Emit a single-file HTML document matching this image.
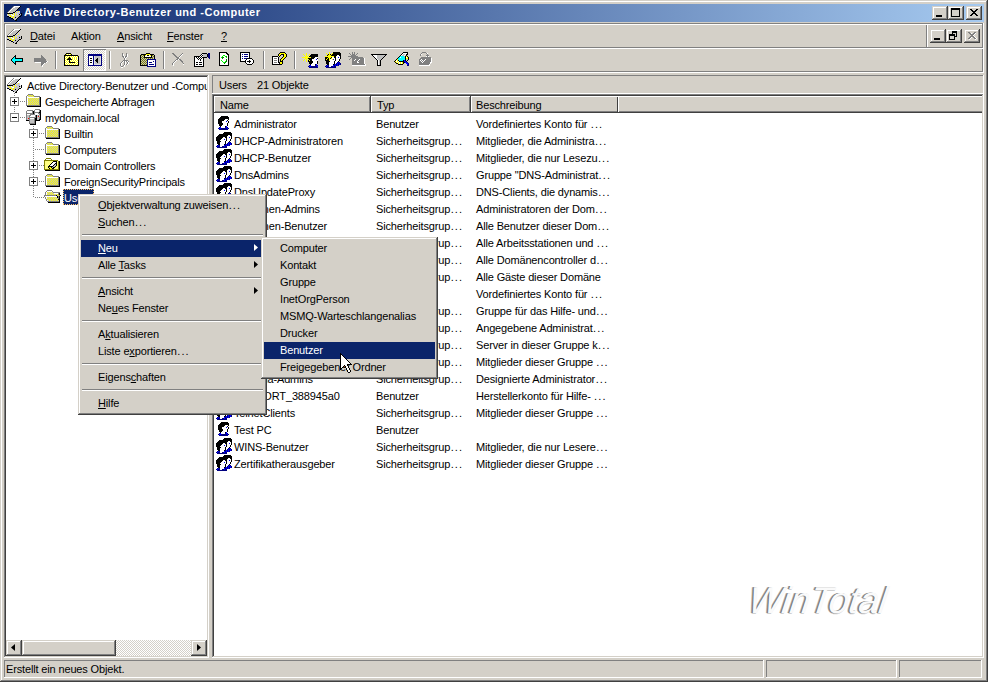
<!DOCTYPE html><html><head><meta charset="utf-8"><style>
html,body{margin:0;padding:0;}
body{width:988px;height:682px;position:relative;overflow:hidden;background:#d4d0c8;}
div,svg{position:absolute;}
.t{font-family:"Liberation Sans",sans-serif;font-size:11px;line-height:16px;letter-spacing:-0.15px;white-space:nowrap;}
u{text-decoration:underline;text-underline-offset:1px;}
.e{letter-spacing:1.1px;padding-left:0.5px}
</style></head><body>
<div style="left:0px;top:0px;width:988px;height:682px;background:#d4d0c8;"></div>
<div style="left:1px;top:1px;width:986px;height:1px;background:#ffffff;"></div>
<div style="left:1px;top:1px;width:1px;height:680px;background:#ffffff;"></div>
<div style="left:1px;top:680px;width:986px;height:1px;background:#808080;"></div>
<div style="left:986px;top:1px;width:1px;height:680px;background:#808080;"></div>
<div style="left:0px;top:681px;width:988px;height:1px;background:#404040;"></div>
<div style="left:987px;top:0px;width:1px;height:682px;background:#404040;"></div>
<div style="left:4px;top:4px;width:980px;height:18px;background:linear-gradient(to right,#0a246a,#a6caf0)"></div>
<div class="t" style="left:24px;top:4px;color:#fff;font-weight:bold;letter-spacing:0.5px">Active Directory-Benutzer und -Computer</div>
<div style="left:932px;top:6px;width:16px;height:14px;background:#d4d0c8;"></div>
<div style="left:932px;top:6px;width:16px;height:1px;background:#d4d0c8;"></div>
<div style="left:932px;top:6px;width:1px;height:14px;background:#d4d0c8;"></div>
<div style="left:933px;top:7px;width:14px;height:1px;background:#ffffff;"></div>
<div style="left:933px;top:7px;width:1px;height:12px;background:#ffffff;"></div>
<div style="left:933px;top:18px;width:14px;height:1px;background:#808080;"></div>
<div style="left:946px;top:7px;width:1px;height:12px;background:#808080;"></div>
<div style="left:932px;top:19px;width:16px;height:1px;background:#404040;"></div>
<div style="left:947px;top:6px;width:1px;height:14px;background:#404040;"></div>
<div style="left:948px;top:6px;width:16px;height:14px;background:#d4d0c8;"></div>
<div style="left:948px;top:6px;width:16px;height:1px;background:#d4d0c8;"></div>
<div style="left:948px;top:6px;width:1px;height:14px;background:#d4d0c8;"></div>
<div style="left:949px;top:7px;width:14px;height:1px;background:#ffffff;"></div>
<div style="left:949px;top:7px;width:1px;height:12px;background:#ffffff;"></div>
<div style="left:949px;top:18px;width:14px;height:1px;background:#808080;"></div>
<div style="left:962px;top:7px;width:1px;height:12px;background:#808080;"></div>
<div style="left:948px;top:19px;width:16px;height:1px;background:#404040;"></div>
<div style="left:963px;top:6px;width:1px;height:14px;background:#404040;"></div>
<div style="left:966px;top:6px;width:16px;height:14px;background:#d4d0c8;"></div>
<div style="left:966px;top:6px;width:16px;height:1px;background:#d4d0c8;"></div>
<div style="left:966px;top:6px;width:1px;height:14px;background:#d4d0c8;"></div>
<div style="left:967px;top:7px;width:14px;height:1px;background:#ffffff;"></div>
<div style="left:967px;top:7px;width:1px;height:12px;background:#ffffff;"></div>
<div style="left:967px;top:18px;width:14px;height:1px;background:#808080;"></div>
<div style="left:980px;top:7px;width:1px;height:12px;background:#808080;"></div>
<div style="left:966px;top:19px;width:16px;height:1px;background:#404040;"></div>
<div style="left:981px;top:6px;width:1px;height:14px;background:#404040;"></div>
<div style="left:936px;top:15px;width:6px;height:2px;background:#000;"></div>
<div style="left:951px;top:8px;width:9px;height:2px;background:#000;"></div>
<div style="left:951px;top:8px;width:1px;height:9px;background:#000;"></div>
<div style="left:959px;top:8px;width:1px;height:9px;background:#000;"></div>
<div style="left:951px;top:16px;width:9px;height:1px;background:#000;"></div>
<div style="left:4px;top:23px;width:980px;height:1px;background:#808080;"></div>
<div style="left:4px;top:23px;width:1px;height:50px;background:#808080;"></div>
<div style="left:5px;top:24px;width:978px;height:1px;background:#ffffff;"></div>
<div style="left:5px;top:24px;width:1px;height:48px;background:#ffffff;"></div>
<div style="left:982px;top:24px;width:1px;height:48px;background:#808080;"></div>
<div style="left:983px;top:23px;width:1px;height:50px;background:#ffffff;"></div>
<div style="left:5px;top:71px;width:978px;height:1px;background:#808080;"></div>
<div style="left:4px;top:72px;width:980px;height:1px;background:#ffffff;"></div>
<div style="left:6px;top:47px;width:976px;height:1px;background:#808080;"></div>
<div style="left:5px;top:48px;width:978px;height:1px;background:#ffffff;"></div>
<div class="t" style="left:30px;top:28px;color:#000;"><u>D</u>atei</div>
<div class="t" style="left:71px;top:28px;color:#000;">Ak<u>t</u>ion</div>
<div class="t" style="left:117px;top:28px;color:#000;"><u>A</u>nsicht</div>
<div class="t" style="left:167px;top:28px;color:#000;"><u>F</u>enster</div>
<div class="t" style="left:221px;top:28px;color:#000;"><u>?</u></div>
<div style="left:926px;top:25px;width:1px;height:22px;background:#808080;"></div>
<div style="left:927px;top:25px;width:1px;height:22px;background:#ffffff;"></div>
<div style="left:930px;top:29px;width:16px;height:14px;background:#d4d0c8;"></div>
<div style="left:930px;top:29px;width:16px;height:1px;background:#d4d0c8;"></div>
<div style="left:930px;top:29px;width:1px;height:14px;background:#d4d0c8;"></div>
<div style="left:931px;top:30px;width:14px;height:1px;background:#ffffff;"></div>
<div style="left:931px;top:30px;width:1px;height:12px;background:#ffffff;"></div>
<div style="left:931px;top:41px;width:14px;height:1px;background:#808080;"></div>
<div style="left:944px;top:30px;width:1px;height:12px;background:#808080;"></div>
<div style="left:930px;top:42px;width:16px;height:1px;background:#404040;"></div>
<div style="left:945px;top:29px;width:1px;height:14px;background:#404040;"></div>
<div style="left:946px;top:29px;width:16px;height:14px;background:#d4d0c8;"></div>
<div style="left:946px;top:29px;width:16px;height:1px;background:#d4d0c8;"></div>
<div style="left:946px;top:29px;width:1px;height:14px;background:#d4d0c8;"></div>
<div style="left:947px;top:30px;width:14px;height:1px;background:#ffffff;"></div>
<div style="left:947px;top:30px;width:1px;height:12px;background:#ffffff;"></div>
<div style="left:947px;top:41px;width:14px;height:1px;background:#808080;"></div>
<div style="left:960px;top:30px;width:1px;height:12px;background:#808080;"></div>
<div style="left:946px;top:42px;width:16px;height:1px;background:#404040;"></div>
<div style="left:961px;top:29px;width:1px;height:14px;background:#404040;"></div>
<div style="left:964px;top:29px;width:16px;height:14px;background:#d4d0c8;"></div>
<div style="left:964px;top:29px;width:16px;height:1px;background:#d4d0c8;"></div>
<div style="left:964px;top:29px;width:1px;height:14px;background:#d4d0c8;"></div>
<div style="left:965px;top:30px;width:14px;height:1px;background:#ffffff;"></div>
<div style="left:965px;top:30px;width:1px;height:12px;background:#ffffff;"></div>
<div style="left:965px;top:41px;width:14px;height:1px;background:#808080;"></div>
<div style="left:978px;top:30px;width:1px;height:12px;background:#808080;"></div>
<div style="left:964px;top:42px;width:16px;height:1px;background:#404040;"></div>
<div style="left:979px;top:29px;width:1px;height:14px;background:#404040;"></div>
<div style="left:55px;top:51px;width:1px;height:18px;background:#808080;"></div>
<div style="left:56px;top:51px;width:1px;height:18px;background:#ffffff;"></div>
<div style="left:109px;top:51px;width:1px;height:18px;background:#808080;"></div>
<div style="left:110px;top:51px;width:1px;height:18px;background:#ffffff;"></div>
<div style="left:163px;top:51px;width:1px;height:18px;background:#808080;"></div>
<div style="left:164px;top:51px;width:1px;height:18px;background:#ffffff;"></div>
<div style="left:263px;top:51px;width:1px;height:18px;background:#808080;"></div>
<div style="left:264px;top:51px;width:1px;height:18px;background:#ffffff;"></div>
<div style="left:294px;top:51px;width:1px;height:18px;background:#808080;"></div>
<div style="left:295px;top:51px;width:1px;height:18px;background:#ffffff;"></div>
<div style="left:6px;top:77px;width:201px;height:579px;background:#fff;"></div>
<div style="left:4px;top:75px;width:205px;height:1px;background:#808080;"></div>
<div style="left:4px;top:75px;width:1px;height:583px;background:#808080;"></div>
<div style="left:5px;top:76px;width:203px;height:1px;background:#404040;"></div>
<div style="left:5px;top:76px;width:1px;height:581px;background:#404040;"></div>
<div style="left:5px;top:656px;width:203px;height:1px;background:#d4d0c8;"></div>
<div style="left:207px;top:76px;width:1px;height:581px;background:#d4d0c8;"></div>
<div style="left:4px;top:657px;width:205px;height:1px;background:#ffffff;"></div>
<div style="left:208px;top:75px;width:1px;height:583px;background:#ffffff;"></div>
<div style="left:212px;top:75px;width:772px;height:1px;background:#808080;"></div>
<div style="left:212px;top:75px;width:1px;height:19px;background:#808080;"></div>
<div style="left:212px;top:93px;width:772px;height:1px;background:#ffffff;"></div>
<div style="left:983px;top:75px;width:1px;height:19px;background:#ffffff;"></div>
<div class="t" style="left:219px;top:77px;color:#000;">Users</div>
<div class="t" style="left:257px;top:77px;color:#000;">21 Objekte</div>
<div style="left:214px;top:96px;width:768px;height:560px;background:#fff;"></div>
<div style="left:212px;top:94px;width:772px;height:1px;background:#808080;"></div>
<div style="left:212px;top:94px;width:1px;height:564px;background:#808080;"></div>
<div style="left:213px;top:95px;width:770px;height:1px;background:#404040;"></div>
<div style="left:213px;top:95px;width:1px;height:562px;background:#404040;"></div>
<div style="left:213px;top:656px;width:770px;height:1px;background:#d4d0c8;"></div>
<div style="left:982px;top:95px;width:1px;height:562px;background:#d4d0c8;"></div>
<div style="left:212px;top:657px;width:772px;height:1px;background:#ffffff;"></div>
<div style="left:983px;top:94px;width:1px;height:564px;background:#ffffff;"></div>
<div style="left:4px;top:660px;width:760px;height:1px;background:#808080;"></div>
<div style="left:4px;top:660px;width:1px;height:18px;background:#808080;"></div>
<div style="left:4px;top:677px;width:760px;height:1px;background:#ffffff;"></div>
<div style="left:763px;top:660px;width:1px;height:18px;background:#ffffff;"></div>
<div style="left:766px;top:660px;width:131px;height:1px;background:#808080;"></div>
<div style="left:766px;top:660px;width:1px;height:18px;background:#808080;"></div>
<div style="left:766px;top:677px;width:131px;height:1px;background:#ffffff;"></div>
<div style="left:896px;top:660px;width:1px;height:18px;background:#ffffff;"></div>
<div style="left:899px;top:660px;width:83px;height:1px;background:#808080;"></div>
<div style="left:899px;top:660px;width:1px;height:18px;background:#808080;"></div>
<div style="left:899px;top:677px;width:83px;height:1px;background:#ffffff;"></div>
<div style="left:981px;top:660px;width:1px;height:18px;background:#ffffff;"></div>
<div class="t" style="left:6px;top:661px;color:#000;">Erstellt ein neues Objekt.</div>
<svg style="left:6px;top:5px" width="16" height="16" shape-rendering="crispEdges"><path fill="#808080" d="M7 1h1v1h-1zM6 2h1v1h-1zM5 3h1v1h-1zM4 4h1v1h-1zM3 5h1v1h-1zM2 6h1v1h-1zM1 7h1v1h-1z"/><path fill="#ffffff" d="M8 1h6v1h-6zM7 2h2v1h-2zM6 3h1v1h-1zM5 4h1v1h-1zM4 5h1v1h-1zM3 6h1v1h-1zM2 7h1v1h-1zM5 9h1v1h-1zM6 10h2v1h-2z"/><path fill="#000000" d="M14 1h1v1h-1zM13 2h1v1h-1zM12 3h1v1h-1zM11 4h1v1h-1zM10 5h1v1h-1zM9 6h1v1h-1zM7 7h2v1h-2zM1 8h6v1h-6zM15 8h1v1h-1zM13 9h1v1h-1zM15 9h1v1h-1zM15 10h1v1h-1zM1 11h2v1h-2zM13 11h2v1h-2zM3 12h2v1h-2zM9 12h1v1h-1zM12 12h1v1h-1zM5 13h2v1h-2zM11 13h1v1h-1zM7 14h1v1h-1zM10 14h1v1h-1zM9 15h2v1h-2z"/><path fill="#c0c0c0" d="M9 2h4v1h-4zM7 3h5v1h-5zM6 4h5v1h-5zM5 5h5v1h-5zM4 6h5v1h-5zM3 7h4v1h-4zM12 8h2v1h-2zM14 9h1v1h-1zM9 10h5v1h-5zM8 11h5v1h-5zM8 12h1v1h-1zM10 12h2v1h-2zM8 13h3v1h-3zM8 14h2v1h-2z"/><path fill="#c4c4ec" d="M10 6h2v1h-2zM13 6h1v1h-1zM9 7h1v1h-1zM11 7h3v1h-3zM7 8h1v1h-1zM9 8h3v1h-3zM1 9h1v1h-1zM3 9h2v1h-2zM7 9h1v1h-1zM9 9h1v1h-1zM11 9h2v1h-2zM1 10h2v1h-2zM5 10h1v1h-1zM3 11h1v1h-1zM6 11h1v1h-1zM5 12h1v1h-1zM7 13h1v1h-1z"/><path fill="#ffff00" d="M12 6h1v1h-1zM10 7h1v1h-1zM8 8h1v1h-1zM2 9h1v1h-1zM6 9h1v1h-1zM8 9h1v1h-1zM10 9h1v1h-1zM3 10h2v1h-2zM8 10h1v1h-1zM4 11h2v1h-2zM7 11h1v1h-1zM6 12h2v1h-2z"/></svg>
<svg style="left:6px;top:28px" width="16" height="16" shape-rendering="crispEdges"><path fill="#808080" d="M7 1h1v1h-1zM6 2h1v1h-1zM5 3h1v1h-1zM4 4h1v1h-1zM3 5h1v1h-1zM2 6h1v1h-1zM1 7h1v1h-1z"/><path fill="#ffffff" d="M8 1h6v1h-6zM7 2h2v1h-2zM6 3h1v1h-1zM5 4h1v1h-1zM4 5h1v1h-1zM3 6h1v1h-1zM2 7h1v1h-1zM5 9h1v1h-1zM6 10h2v1h-2z"/><path fill="#000000" d="M14 1h1v1h-1zM13 2h1v1h-1zM12 3h1v1h-1zM11 4h1v1h-1zM10 5h1v1h-1zM9 6h1v1h-1zM7 7h2v1h-2zM1 8h6v1h-6zM15 8h1v1h-1zM13 9h1v1h-1zM15 9h1v1h-1zM15 10h1v1h-1zM1 11h2v1h-2zM13 11h2v1h-2zM3 12h2v1h-2zM9 12h1v1h-1zM12 12h1v1h-1zM5 13h2v1h-2zM11 13h1v1h-1zM7 14h1v1h-1zM10 14h1v1h-1zM9 15h2v1h-2z"/><path fill="#c0c0c0" d="M9 2h4v1h-4zM7 3h5v1h-5zM6 4h5v1h-5zM5 5h5v1h-5zM4 6h5v1h-5zM3 7h4v1h-4zM12 8h2v1h-2zM14 9h1v1h-1zM9 10h5v1h-5zM8 11h5v1h-5zM8 12h1v1h-1zM10 12h2v1h-2zM8 13h3v1h-3zM8 14h2v1h-2z"/><path fill="#c4c4ec" d="M10 6h2v1h-2zM13 6h1v1h-1zM9 7h1v1h-1zM11 7h3v1h-3zM7 8h1v1h-1zM9 8h3v1h-3zM1 9h1v1h-1zM3 9h2v1h-2zM7 9h1v1h-1zM9 9h1v1h-1zM11 9h2v1h-2zM1 10h2v1h-2zM5 10h1v1h-1zM3 11h1v1h-1zM6 11h1v1h-1zM5 12h1v1h-1zM7 13h1v1h-1z"/><path fill="#ffff00" d="M12 6h1v1h-1zM10 7h1v1h-1zM8 8h1v1h-1zM2 9h1v1h-1zM6 9h1v1h-1zM8 9h1v1h-1zM10 9h1v1h-1zM3 10h2v1h-2zM8 10h1v1h-1zM4 11h2v1h-2zM7 11h1v1h-1zM6 12h2v1h-2z"/></svg>
<div style="left:83px;top:49px;width:23px;height:22px;background:repeating-conic-gradient(#fff 0 25%,#d4d0c8 0 50%) 0 0/2px 2px"></div>
<div style="left:83px;top:49px;width:23px;height:1px;background:#808080;"></div>
<div style="left:83px;top:49px;width:1px;height:22px;background:#808080;"></div>
<div style="left:84px;top:70px;width:22px;height:1px;background:#ffffff;"></div>
<div style="left:105px;top:50px;width:1px;height:21px;background:#ffffff;"></div>
<svg style="left:8px;top:52px" width="18" height="13" shape-rendering="crispEdges"><path fill="#000000" d="M7 3h1v1h-1zM6 4h2v1h-2zM5 5h1v1h-1zM7 5h1v1h-1zM4 6h1v1h-1zM7 6h8v1h-8zM3 7h1v1h-1zM14 7h1v1h-1zM3 8h1v1h-1zM14 8h1v1h-1zM4 9h1v1h-1zM7 9h8v1h-8zM5 10h1v1h-1zM7 10h1v1h-1zM6 11h2v1h-2zM7 12h1v1h-1z"/><path fill="#00ffff" d="M6 5h1v1h-1zM5 6h2v1h-2zM4 7h10v1h-10zM4 8h10v1h-10zM5 9h2v1h-2zM6 10h1v1h-1z"/></svg>
<svg style="left:31px;top:52px" width="18" height="15" shape-rendering="crispEdges"><path fill="#808080" d="M10 3h1v1h-1zM10 4h2v1h-2zM10 5h3v1h-3zM3 6h11v1h-11zM3 7h12v1h-12zM3 8h12v1h-12zM3 9h13v1h-13zM10 10h5v1h-5zM10 11h3v1h-3zM10 12h2v1h-2zM10 13h1v1h-1z"/><path fill="#ffffff" d="M16 9h1v1h-1zM4 10h6v1h-6zM15 10h1v1h-1zM13 11h1v1h-1zM12 12h1v1h-1zM11 13h1v1h-1zM11 14h1v1h-1z"/></svg>
<svg style="left:62px;top:51px" width="17" height="15" shape-rendering="crispEdges"><path fill="#000000" d="M4 2h5v1h-5zM3 3h1v1h-1zM9 3h1v1h-1zM2 4h14v1h-14zM2 5h1v1h-1zM16 5h1v1h-1zM2 6h1v1h-1zM7 6h1v1h-1zM16 6h1v1h-1zM2 7h1v1h-1zM6 7h3v1h-3zM16 7h1v1h-1zM2 8h1v1h-1zM5 8h5v1h-5zM16 8h1v1h-1zM2 9h1v1h-1zM7 9h1v1h-1zM16 9h1v1h-1zM2 10h1v1h-1zM7 10h1v1h-1zM16 10h1v1h-1zM2 11h1v1h-1zM7 11h6v1h-6zM16 11h1v1h-1zM2 12h1v1h-1zM16 12h1v1h-1zM2 13h1v1h-1zM16 13h1v1h-1zM2 14h15v1h-15z"/><path fill="#ffff00" d="M4 3h1v1h-1zM6 3h1v1h-1zM8 3h1v1h-1zM3 5h1v1h-1zM5 5h1v1h-1zM7 5h1v1h-1zM9 5h1v1h-1zM11 5h1v1h-1zM13 5h1v1h-1zM15 5h1v1h-1zM4 6h1v1h-1zM6 6h1v1h-1zM8 6h1v1h-1zM10 6h1v1h-1zM12 6h1v1h-1zM14 6h1v1h-1zM3 7h1v1h-1zM5 7h1v1h-1zM10 7h1v1h-1zM12 7h1v1h-1zM14 7h1v1h-1zM4 8h1v1h-1zM10 8h1v1h-1zM12 8h1v1h-1zM14 8h1v1h-1zM3 9h1v1h-1zM5 9h1v1h-1zM9 9h1v1h-1zM11 9h1v1h-1zM13 9h1v1h-1zM15 9h1v1h-1zM4 10h1v1h-1zM6 10h1v1h-1zM8 10h1v1h-1zM10 10h1v1h-1zM12 10h1v1h-1zM14 10h1v1h-1zM3 11h1v1h-1zM5 11h1v1h-1zM13 11h1v1h-1zM15 11h1v1h-1zM4 12h1v1h-1zM6 12h1v1h-1zM8 12h1v1h-1zM10 12h1v1h-1zM12 12h1v1h-1zM14 12h1v1h-1zM3 13h1v1h-1zM5 13h1v1h-1zM7 13h1v1h-1zM9 13h1v1h-1zM11 13h1v1h-1zM13 13h1v1h-1zM15 13h1v1h-1z"/><path fill="#ffffff" d="M5 3h1v1h-1zM7 3h1v1h-1zM4 5h1v1h-1zM6 5h1v1h-1zM8 5h1v1h-1zM10 5h1v1h-1zM12 5h1v1h-1zM14 5h1v1h-1zM3 6h1v1h-1zM5 6h1v1h-1zM9 6h1v1h-1zM11 6h1v1h-1zM13 6h1v1h-1zM15 6h1v1h-1zM4 7h1v1h-1zM9 7h1v1h-1zM11 7h1v1h-1zM13 7h1v1h-1zM15 7h1v1h-1zM3 8h1v1h-1zM11 8h1v1h-1zM13 8h1v1h-1zM15 8h1v1h-1zM4 9h1v1h-1zM6 9h1v1h-1zM8 9h1v1h-1zM10 9h1v1h-1zM12 9h1v1h-1zM14 9h1v1h-1zM3 10h1v1h-1zM5 10h1v1h-1zM9 10h1v1h-1zM11 10h1v1h-1zM13 10h1v1h-1zM15 10h1v1h-1zM4 11h1v1h-1zM6 11h1v1h-1zM14 11h1v1h-1zM3 12h1v1h-1zM5 12h1v1h-1zM7 12h1v1h-1zM9 12h1v1h-1zM11 12h1v1h-1zM13 12h1v1h-1zM15 12h1v1h-1zM4 13h1v1h-1zM6 13h1v1h-1zM8 13h1v1h-1zM10 13h1v1h-1zM12 13h1v1h-1zM14 13h1v1h-1z"/></svg>
<svg style="left:84px;top:50px" width="18" height="16" shape-rendering="crispEdges"><path fill="#000080" d="M4 4h14v1h-14zM4 5h14v1h-14zM4 6h1v1h-1zM9 6h1v1h-1zM17 6h1v1h-1zM4 7h1v1h-1zM9 7h1v1h-1zM17 7h1v1h-1zM4 8h1v1h-1zM9 8h1v1h-1zM17 8h1v1h-1zM4 9h1v1h-1zM9 9h1v1h-1zM17 9h1v1h-1zM4 10h1v1h-1zM9 10h1v1h-1zM17 10h1v1h-1zM4 11h1v1h-1zM9 11h1v1h-1zM17 11h1v1h-1zM4 12h1v1h-1zM9 12h1v1h-1zM17 12h1v1h-1zM4 13h1v1h-1zM9 13h1v1h-1zM17 13h1v1h-1zM4 14h1v1h-1zM9 14h1v1h-1zM17 14h1v1h-1zM4 15h14v1h-14z"/><path fill="#ffffff" d="M5 6h4v1h-4zM5 7h4v1h-4zM5 8h1v1h-1zM8 8h1v1h-1zM5 9h4v1h-4zM5 10h1v1h-1zM8 10h1v1h-1zM5 11h4v1h-4zM5 12h1v1h-1zM8 12h1v1h-1zM5 13h4v1h-4zM5 14h4v1h-4z"/><path fill="#e0e0e0" d="M10 6h1v1h-1zM16 6h1v1h-1zM10 7h1v1h-1zM16 7h1v1h-1zM10 8h1v1h-1zM16 8h1v1h-1zM10 9h1v1h-1zM16 9h1v1h-1zM10 10h1v1h-1zM16 10h1v1h-1zM10 11h1v1h-1zM16 11h1v1h-1zM10 12h1v1h-1zM16 12h1v1h-1zM10 13h1v1h-1zM16 13h1v1h-1zM10 14h7v1h-7z"/><path fill="#c0c0c0" d="M11 6h5v1h-5zM11 7h5v1h-5zM11 8h2v1h-2zM14 8h2v1h-2zM11 9h1v1h-1zM14 9h2v1h-2zM14 10h2v1h-2zM11 11h1v1h-1zM14 11h2v1h-2zM11 12h2v1h-2zM14 12h2v1h-2zM11 13h5v1h-5z"/><path fill="#000000" d="M6 8h2v1h-2zM13 8h1v1h-1zM12 9h2v1h-2zM6 10h2v1h-2zM11 10h3v1h-3zM12 11h2v1h-2zM6 12h2v1h-2zM13 12h1v1h-1z"/></svg>
<svg style="left:115px;top:50px" width="16" height="18" shape-rendering="crispEdges"><path fill="#808080" d="M7 3h1v1h-1zM11 3h1v1h-1zM7 4h1v1h-1zM11 4h1v1h-1zM7 5h1v1h-1zM11 5h1v1h-1zM7 6h2v1h-2zM10 6h2v1h-2zM8 7h1v1h-1zM10 7h1v1h-1zM9 8h1v1h-1zM9 9h1v1h-1zM8 10h5v1h-5zM7 11h1v1h-1zM9 11h1v1h-1zM11 11h1v1h-1zM13 11h1v1h-1zM6 12h1v1h-1zM9 12h1v1h-1zM12 12h1v1h-1zM5 13h1v1h-1zM9 13h1v1h-1zM12 13h1v1h-1zM5 14h1v1h-1zM9 14h1v1h-1zM11 14h1v1h-1zM5 15h1v1h-1zM8 15h1v1h-1zM6 16h2v1h-2z"/><path fill="#ffffff" d="M8 4h1v1h-1zM12 4h1v1h-1zM8 5h1v1h-1zM12 5h1v1h-1zM9 6h1v1h-1zM12 6h1v1h-1zM9 7h1v1h-1zM11 7h1v1h-1zM10 8h1v1h-1zM10 9h1v1h-1zM8 11h1v1h-1zM10 11h1v1h-1zM12 11h1v1h-1zM7 12h1v1h-1zM10 12h1v1h-1zM13 12h1v1h-1zM6 13h1v1h-1zM10 13h1v1h-1zM13 13h1v1h-1zM6 14h1v1h-1zM10 14h1v1h-1zM12 14h1v1h-1zM6 15h1v1h-1zM9 15h1v1h-1zM9 16h1v1h-1zM6 17h2v1h-2z"/></svg>
<svg style="left:138px;top:50px" width="18" height="17" shape-rendering="crispEdges"><path fill="#000000" d="M8 3h4v1h-4zM3 4h5v1h-5zM12 4h4v1h-4zM2 5h1v1h-1zM6 5h1v1h-1zM9 5h2v1h-2zM13 5h1v1h-1zM16 5h1v1h-1zM2 6h1v1h-1zM6 6h1v1h-1zM13 6h1v1h-1zM16 6h1v1h-1zM2 7h1v1h-1zM6 7h8v1h-8zM16 7h1v1h-1zM2 8h1v1h-1zM16 8h1v1h-1zM2 9h1v1h-1zM2 10h1v1h-1zM2 11h1v1h-1zM2 12h1v1h-1zM2 13h1v1h-1zM2 14h1v1h-1zM2 15h7v1h-7z"/><path fill="#ffff00" d="M8 4h4v1h-4zM7 5h1v1h-1zM12 5h1v1h-1z"/><path fill="#808000" d="M3 5h1v1h-1zM5 5h1v1h-1zM14 5h1v1h-1zM4 6h1v1h-1zM15 6h1v1h-1zM3 7h1v1h-1zM5 7h1v1h-1zM14 7h1v1h-1zM4 8h1v1h-1zM6 8h1v1h-1zM8 8h1v1h-1zM10 8h1v1h-1zM12 8h1v1h-1zM14 8h1v1h-1zM3 9h1v1h-1zM5 9h1v1h-1zM7 9h1v1h-1zM4 10h1v1h-1zM6 10h1v1h-1zM8 10h1v1h-1zM3 11h1v1h-1zM5 11h1v1h-1zM7 11h1v1h-1zM4 12h1v1h-1zM6 12h1v1h-1zM8 12h1v1h-1zM3 13h1v1h-1zM5 13h1v1h-1zM7 13h1v1h-1zM4 14h1v1h-1zM6 14h1v1h-1zM8 14h1v1h-1z"/><path fill="#c0c0c0" d="M4 5h1v1h-1zM15 5h1v1h-1zM3 6h1v1h-1zM5 6h1v1h-1zM14 6h1v1h-1zM4 7h1v1h-1zM15 7h1v1h-1zM3 8h1v1h-1zM5 8h1v1h-1zM7 8h1v1h-1zM9 8h1v1h-1zM11 8h1v1h-1zM13 8h1v1h-1zM15 8h1v1h-1zM4 9h1v1h-1zM6 9h1v1h-1zM8 9h1v1h-1zM3 10h1v1h-1zM5 10h1v1h-1zM7 10h1v1h-1zM4 11h1v1h-1zM6 11h1v1h-1zM8 11h1v1h-1zM3 12h1v1h-1zM5 12h1v1h-1zM7 12h1v1h-1zM4 13h1v1h-1zM6 13h1v1h-1zM8 13h1v1h-1zM3 14h1v1h-1zM5 14h1v1h-1zM7 14h1v1h-1z"/><path fill="#ffffff" d="M8 5h1v1h-1zM11 5h1v1h-1zM7 6h6v1h-6zM10 10h7v1h-7zM10 11h5v1h-5zM16 11h1v1h-1zM10 12h1v1h-1zM14 12h3v1h-3zM10 13h7v1h-7zM10 14h1v1h-1zM16 14h1v1h-1zM10 15h7v1h-7z"/><path fill="#000080" d="M9 9h9v1h-9zM9 10h1v1h-1zM17 10h1v1h-1zM9 11h1v1h-1zM15 11h1v1h-1zM17 11h1v1h-1zM9 12h1v1h-1zM11 12h3v1h-3zM17 12h1v1h-1zM9 13h1v1h-1zM17 13h1v1h-1zM9 14h1v1h-1zM11 14h5v1h-5zM17 14h1v1h-1zM9 15h1v1h-1zM17 15h1v1h-1zM9 16h9v1h-9z"/></svg>
<svg style="left:169px;top:50px" width="16" height="16" shape-rendering="crispEdges"><path fill="#808080" d="M3 3h2v1h-2zM13 3h1v1h-1zM4 4h2v1h-2zM12 4h1v1h-1zM5 5h2v1h-2zM11 5h1v1h-1zM6 6h2v1h-2zM10 6h1v1h-1zM7 7h3v1h-3zM8 8h2v1h-2zM7 9h2v1h-2zM10 9h2v1h-2zM6 10h1v1h-1zM11 10h2v1h-2zM5 11h1v1h-1zM12 11h2v1h-2zM4 12h1v1h-1zM13 12h1v1h-1zM3 13h1v1h-1zM14 13h1v1h-1zM3 14h1v1h-1z"/><path fill="#ffffff" d="M13 4h1v1h-1zM12 5h1v1h-1zM11 6h1v1h-1zM10 7h1v1h-1zM9 9h1v1h-1zM7 10h1v1h-1zM6 11h1v1h-1zM5 12h1v1h-1zM4 13h1v1h-1zM4 14h1v1h-1zM14 14h1v1h-1zM4 15h1v1h-1z"/></svg>
<svg style="left:192px;top:50px" width="18" height="17" shape-rendering="crispEdges"><path fill="#000000" d="M10 3h5v1h-5zM9 4h1v1h-1zM15 4h1v1h-1zM8 5h1v1h-1zM10 5h1v1h-1zM15 5h1v1h-1zM2 6h6v1h-6zM9 6h1v1h-1zM15 6h1v1h-1zM2 7h1v1h-1zM4 7h1v1h-1zM6 7h1v1h-1zM8 7h1v1h-1zM10 7h5v1h-5zM2 8h1v1h-1zM5 8h1v1h-1zM7 8h1v1h-1zM9 8h1v1h-1zM11 8h1v1h-1zM2 9h1v1h-1zM6 9h1v1h-1zM8 9h1v1h-1zM11 9h1v1h-1zM2 10h1v1h-1zM8 10h1v1h-1zM11 10h1v1h-1zM2 11h1v1h-1zM11 11h1v1h-1zM2 12h1v1h-1zM4 12h2v1h-2zM7 12h3v1h-3zM11 12h1v1h-1zM2 13h1v1h-1zM11 13h1v1h-1zM2 14h1v1h-1zM4 14h2v1h-2zM7 14h3v1h-3zM11 14h1v1h-1zM2 15h1v1h-1zM11 15h1v1h-1zM2 16h10v1h-10z"/><path fill="#000080" d="M16 3h2v1h-2zM16 4h2v1h-2zM16 5h2v1h-2zM16 6h2v1h-2zM16 7h2v1h-2zM17 8h1v1h-1z"/><path fill="#ffffff" d="M10 4h1v1h-1zM9 5h1v1h-1zM8 6h1v1h-1zM10 6h1v1h-1zM3 7h1v1h-1zM5 7h1v1h-1zM7 7h1v1h-1zM9 7h1v1h-1zM3 8h2v1h-2zM6 8h1v1h-1zM8 8h1v1h-1zM10 8h1v1h-1zM3 9h3v1h-3zM7 9h1v1h-1zM9 9h2v1h-2zM3 10h5v1h-5zM9 10h2v1h-2zM3 11h8v1h-8zM3 12h1v1h-1zM6 12h1v1h-1zM10 12h1v1h-1zM3 13h8v1h-8zM3 14h1v1h-1zM6 14h1v1h-1zM10 14h1v1h-1zM3 15h8v1h-8z"/><path fill="#c0c0c0" d="M11 4h4v1h-4zM11 5h4v1h-4zM11 6h4v1h-4z"/></svg>
<svg style="left:217px;top:50px" width="15" height="16" shape-rendering="crispEdges"><path fill="#000000" d="M2 2h8v1h-8zM2 3h1v1h-1zM9 3h2v1h-2zM2 4h1v1h-1zM10 4h2v1h-2zM2 5h1v1h-1zM11 5h1v1h-1zM2 6h1v1h-1zM11 6h1v1h-1zM2 7h1v1h-1zM11 7h1v1h-1zM2 8h1v1h-1zM11 8h1v1h-1zM2 9h1v1h-1zM11 9h1v1h-1zM2 10h1v1h-1zM11 10h1v1h-1zM2 11h1v1h-1zM11 11h1v1h-1zM2 12h1v1h-1zM11 12h1v1h-1zM2 13h1v1h-1zM11 13h1v1h-1zM2 14h1v1h-1zM11 14h1v1h-1zM2 15h10v1h-10z"/><path fill="#ffffff" d="M3 3h6v1h-6zM3 4h7v1h-7zM3 5h3v1h-3zM8 5h3v1h-3zM3 6h2v1h-2zM6 6h2v1h-2zM10 6h1v1h-1zM3 7h1v1h-1zM7 7h2v1h-2zM10 7h1v1h-1zM3 8h2v1h-2zM6 8h5v1h-5zM3 9h6v1h-6zM10 9h1v1h-1zM3 10h1v1h-1zM5 10h4v1h-4zM10 10h1v1h-1zM3 11h2v1h-2zM6 11h2v1h-2zM10 11h1v1h-1zM3 12h3v1h-3zM9 12h2v1h-2zM3 13h4v1h-4zM8 13h3v1h-3zM3 14h8v1h-8z"/><path fill="#00ff00" d="M6 5h2v1h-2zM5 6h1v1h-1zM8 6h1v1h-1zM4 7h1v1h-1zM9 7h1v1h-1zM4 10h1v1h-1zM5 11h1v1h-1zM8 11h1v1h-1zM6 12h2v1h-2z"/><path fill="#008000" d="M9 6h1v1h-1zM5 7h2v1h-2zM5 8h1v1h-1zM9 9h1v1h-1zM9 10h1v1h-1zM9 11h1v1h-1zM8 12h1v1h-1zM7 13h1v1h-1z"/></svg>
<svg style="left:240px;top:50px" width="16" height="15" shape-rendering="crispEdges"><path fill="#000000" d="M0 2h10v1h-10zM0 3h1v1h-1zM9 3h1v1h-1zM0 4h1v1h-1zM9 4h1v1h-1zM0 5h1v1h-1zM9 5h1v1h-1zM0 6h1v1h-1zM9 6h1v1h-1zM0 7h1v1h-1zM9 7h1v1h-1zM0 8h1v1h-1zM7 8h5v1h-5zM0 9h1v1h-1zM6 9h1v1h-1zM12 9h1v1h-1zM0 10h1v1h-1zM5 10h1v1h-1zM9 10h1v1h-1zM13 10h1v1h-1zM0 11h6v1h-6zM7 11h4v1h-4zM13 11h1v1h-1zM5 12h1v1h-1zM9 12h1v1h-1zM13 12h1v1h-1zM6 13h1v1h-1zM12 13h1v1h-1zM7 14h5v1h-5z"/><path fill="#ffffff" d="M1 3h8v1h-8zM1 4h1v1h-1zM3 4h1v1h-1zM8 4h1v1h-1zM1 5h8v1h-8zM1 6h1v1h-1zM3 6h1v1h-1zM8 6h1v1h-1zM1 7h8v1h-8zM1 8h1v1h-1zM3 8h1v1h-1zM1 9h5v1h-5zM7 9h5v1h-5zM1 10h4v1h-4zM6 10h3v1h-3zM10 10h3v1h-3zM6 11h1v1h-1zM11 11h2v1h-2zM6 12h3v1h-3zM10 12h3v1h-3zM7 13h5v1h-5z"/><path fill="#000080" d="M2 4h1v1h-1zM4 4h4v1h-4zM2 6h1v1h-1zM4 6h4v1h-4zM2 8h1v1h-1zM4 8h3v1h-3z"/></svg>
<svg style="left:271px;top:50px" width="16" height="15" shape-rendering="crispEdges"><path fill="#000000" d="M9 2h5v1h-5zM8 3h1v1h-1zM14 3h1v1h-1zM7 4h1v1h-1zM10 4h3v1h-3zM15 4h1v1h-1zM7 5h1v1h-1zM9 5h1v1h-1zM12 5h1v1h-1zM15 5h1v1h-1zM1 6h6v1h-6zM8 6h1v1h-1zM12 6h1v1h-1zM15 6h1v1h-1zM1 7h1v1h-1zM7 7h1v1h-1zM11 7h1v1h-1zM14 7h1v1h-1zM1 8h1v1h-1zM7 8h1v1h-1zM10 8h1v1h-1zM13 8h1v1h-1zM1 9h1v1h-1zM7 9h1v1h-1zM9 9h1v1h-1zM12 9h1v1h-1zM1 10h1v1h-1zM7 10h1v1h-1zM9 10h1v1h-1zM11 10h1v1h-1zM1 11h1v1h-1zM7 11h1v1h-1zM9 11h3v1h-3zM1 12h1v1h-1zM7 12h2v1h-2zM11 12h1v1h-1zM1 13h1v1h-1zM8 13h1v1h-1zM11 13h1v1h-1zM1 14h10v1h-10z"/><path fill="#ffff00" d="M9 3h5v1h-5zM8 4h2v1h-2zM13 4h2v1h-2zM8 5h1v1h-1zM13 5h2v1h-2zM13 6h2v1h-2zM12 7h2v1h-2zM11 8h2v1h-2zM10 9h2v1h-2zM10 10h1v1h-1zM9 12h2v1h-2zM9 13h2v1h-2z"/><path fill="#ffffff" d="M2 7h5v1h-5zM2 8h1v1h-1zM6 8h1v1h-1zM2 9h5v1h-5zM2 10h1v1h-1zM6 10h1v1h-1zM2 11h5v1h-5zM2 12h1v1h-1zM6 12h1v1h-1zM2 13h6v1h-6z"/><path fill="#808080" d="M3 8h3v1h-3zM3 10h3v1h-3zM3 12h3v1h-3z"/></svg>
<svg style="left:302px;top:53px" width="16" height="16" shape-rendering="crispEdges"><path fill="#ffff00" d="M4 0h1v1h-1zM1 1h1v1h-1zM4 1h1v1h-1zM7 1h1v1h-1zM2 2h1v1h-1zM4 2h1v1h-1zM6 2h1v1h-1zM3 3h3v1h-3zM0 4h9v1h-9zM3 5h3v1h-3zM2 6h1v1h-1zM4 6h1v1h-1zM6 6h1v1h-1zM1 7h1v1h-1zM4 7h1v1h-1zM7 7h1v1h-1zM4 8h1v1h-1z"/><path fill="#000000" d="M9 1h7v1h-7zM8 2h8v1h-8zM7 3h9v1h-9zM9 4h4v1h-4zM6 5h6v1h-6zM15 5h1v1h-1zM7 6h3v1h-3zM6 7h1v1h-1zM8 7h2v1h-2zM6 8h5v1h-5zM15 8h1v1h-1zM7 9h4v1h-4zM15 9h1v1h-1zM7 10h3v1h-3zM15 10h1v1h-1zM8 11h1v1h-1zM13 11h1v1h-1z"/><path fill="#ffffff" d="M13 4h3v1h-3zM12 5h3v1h-3zM10 6h4v1h-4zM15 6h1v1h-1zM10 7h6v1h-6zM11 8h4v1h-4zM11 9h4v1h-4zM10 10h5v1h-5zM9 11h4v1h-4zM9 12h4v1h-4z"/><path fill="#0000ff" d="M14 6h1v1h-1zM14 11h1v1h-1zM8 12h1v1h-1zM14 12h1v1h-1zM7 13h2v1h-2zM15 13h1v1h-1z"/><path fill="#000080" d="M7 12h1v1h-1zM13 12h1v1h-1zM15 12h1v1h-1zM6 13h1v1h-1zM9 13h6v1h-6zM7 14h9v1h-9z"/></svg>
<svg style="left:325px;top:52px" width="16" height="16" shape-rendering="crispEdges"><path fill="#ffff00" d="M4 0h1v1h-1zM1 1h1v1h-1zM4 1h1v1h-1zM7 1h1v1h-1zM2 2h1v1h-1zM4 2h1v1h-1zM6 2h1v1h-1zM3 3h3v1h-3zM0 4h9v1h-9zM3 5h3v1h-3zM2 6h1v1h-1zM4 6h1v1h-1zM6 6h1v1h-1zM1 7h1v1h-1zM4 7h1v1h-1zM7 7h1v1h-1zM4 8h1v1h-1z"/><path fill="#000000" d="M8 0h7v1h-7zM8 1h8v1h-8zM3 2h1v1h-1zM5 2h1v1h-1zM7 2h9v1h-9zM2 3h1v1h-1zM6 3h6v1h-6zM14 3h2v1h-2zM9 4h2v1h-2zM15 4h1v1h-1zM0 5h3v1h-3zM6 5h1v1h-1zM9 5h2v1h-2zM15 5h1v1h-1zM0 6h2v1h-2zM3 6h1v1h-1zM5 6h1v1h-1zM10 6h1v1h-1zM15 6h1v1h-1zM0 7h1v1h-1zM2 7h2v1h-2zM10 7h1v1h-1zM14 7h1v1h-1zM0 8h4v1h-4zM10 8h1v1h-1zM14 8h1v1h-1zM1 9h4v1h-4zM9 9h1v1h-1zM13 9h1v1h-1zM1 10h3v1h-3zM9 10h1v1h-1zM1 11h3v1h-3zM9 11h1v1h-1zM2 12h2v1h-2zM8 12h1v1h-1z"/><path fill="#ffffff" d="M12 3h2v1h-2zM11 4h4v1h-4zM7 5h2v1h-2zM11 5h2v1h-2zM14 5h1v1h-1zM7 6h3v1h-3zM11 6h4v1h-4zM5 7h2v1h-2zM9 7h1v1h-1zM11 7h3v1h-3zM5 8h5v1h-5zM11 8h3v1h-3zM5 9h4v1h-4zM10 9h3v1h-3zM4 10h5v1h-5zM10 10h2v1h-2zM4 11h5v1h-5zM10 11h1v1h-1zM4 12h4v1h-4zM4 13h4v1h-4zM4 14h2v1h-2z"/><path fill="#0000ff" d="M13 5h1v1h-1zM8 7h1v1h-1zM13 10h1v1h-1zM12 11h1v1h-1zM14 11h1v1h-1zM10 12h1v1h-1zM12 12h1v1h-1zM14 12h1v1h-1zM2 13h1v1h-1zM8 13h1v1h-1zM10 13h1v1h-1zM12 13h1v1h-1zM1 14h1v1h-1zM8 14h1v1h-1z"/><path fill="#000080" d="M12 10h1v1h-1zM14 10h1v1h-1zM11 11h1v1h-1zM13 11h1v1h-1zM15 11h1v1h-1zM9 12h1v1h-1zM11 12h1v1h-1zM13 12h1v1h-1zM15 12h1v1h-1zM1 13h1v1h-1zM3 13h1v1h-1zM9 13h1v1h-1zM11 13h1v1h-1zM13 13h1v1h-1zM0 14h1v1h-1zM2 14h2v1h-2zM6 14h2v1h-2zM9 14h2v1h-2zM1 15h10v1h-10z"/></svg>
<svg style="left:348px;top:50px" width="18" height="16" shape-rendering="crispEdges"><path fill="#808080" d="M4 2h1v1h-1zM6 2h1v1h-1zM1 3h1v1h-1zM4 3h1v1h-1zM6 3h1v1h-1zM9 3h1v1h-1zM2 4h1v1h-1zM4 4h3v1h-3zM8 4h1v1h-1zM3 5h5v1h-5zM0 6h10v1h-10zM3 7h12v1h-12zM2 8h1v1h-1zM4 8h12v1h-12zM1 9h1v1h-1zM4 9h3v1h-3zM8 9h3v1h-3zM12 9h4v1h-4zM4 10h2v1h-2zM7 10h3v1h-3zM11 10h5v1h-5zM4 11h5v1h-5zM10 11h6v1h-6zM4 12h5v1h-5zM11 12h5v1h-5zM4 13h12v1h-12zM4 14h13v1h-13z"/><path fill="#ffffff" d="M16 8h1v1h-1zM7 9h1v1h-1zM11 9h1v1h-1zM16 9h1v1h-1zM6 10h1v1h-1zM10 10h1v1h-1zM16 10h1v1h-1zM9 11h1v1h-1zM16 11h1v1h-1zM9 12h2v1h-2zM16 12h1v1h-1zM16 13h1v1h-1zM17 14h1v1h-1zM4 15h14v1h-14z"/></svg>
<svg style="left:371px;top:50px" width="16" height="16" shape-rendering="crispEdges"><path fill="#000000" d="M0 4h16v1h-16zM1 5h1v1h-1zM14 5h1v1h-1zM2 6h1v1h-1zM13 6h1v1h-1zM3 7h1v1h-1zM12 7h1v1h-1zM4 8h1v1h-1zM11 8h1v1h-1zM5 9h1v1h-1zM10 9h1v1h-1zM6 10h1v1h-1zM9 10h1v1h-1zM6 11h1v1h-1zM9 11h1v1h-1zM6 12h1v1h-1zM9 12h1v1h-1zM6 13h1v1h-1zM9 13h1v1h-1zM6 14h1v1h-1zM9 14h1v1h-1zM6 15h4v1h-4z"/><path fill="#ffffff" d="M2 5h4v1h-4zM3 6h3v1h-3zM4 7h2v1h-2zM5 8h1v1h-1zM6 9h1v1h-1zM7 10h1v1h-1zM7 11h1v1h-1zM7 12h1v1h-1zM7 13h1v1h-1zM7 14h1v1h-1z"/><path fill="#c0c0c0" d="M6 5h8v1h-8zM6 6h7v1h-7zM6 7h6v1h-6zM6 8h5v1h-5zM7 9h3v1h-3zM8 10h1v1h-1zM8 11h1v1h-1zM8 12h1v1h-1zM8 13h1v1h-1zM8 14h1v1h-1z"/></svg>
<svg style="left:394px;top:50px" width="16" height="16" shape-rendering="crispEdges"><path fill="#000000" d="M9 2h5v1h-5zM8 3h1v1h-1zM13 3h1v1h-1zM7 4h1v1h-1zM12 4h2v1h-2zM6 5h1v1h-1zM12 5h1v1h-1zM5 6h1v1h-1zM11 6h1v1h-1zM13 6h1v1h-1zM4 7h1v1h-1zM11 7h1v1h-1zM14 7h1v1h-1zM3 8h1v1h-1zM11 8h1v1h-1zM14 8h1v1h-1zM2 9h1v1h-1zM11 9h1v1h-1zM14 9h1v1h-1zM1 10h1v1h-1zM4 10h1v1h-1zM9 10h1v1h-1zM11 10h1v1h-1zM13 10h1v1h-1zM0 11h1v1h-1zM5 11h5v1h-5zM12 11h1v1h-1zM1 12h1v1h-1zM9 12h2v1h-2zM2 13h2v1h-2zM9 13h1v1h-1zM4 14h5v1h-5z"/><path fill="#ffffff" d="M9 3h4v1h-4zM8 4h1v1h-1zM11 4h1v1h-1zM7 5h1v1h-1zM10 5h1v1h-1zM6 7h1v1h-1zM12 7h1v1h-1zM2 10h1v1h-1zM2 11h1v1h-1zM4 11h1v1h-1zM3 12h1v1h-1zM5 12h1v1h-1zM7 12h1v1h-1zM5 13h1v1h-1zM7 13h1v1h-1z"/><path fill="#c0c0c0" d="M9 4h2v1h-2zM8 5h2v1h-2zM11 5h1v1h-1zM10 6h1v1h-1zM12 9h2v1h-2zM12 10h1v1h-1z"/><path fill="#00ffff" d="M6 6h4v1h-4zM5 7h1v1h-1zM7 7h4v1h-4zM4 8h7v1h-7zM4 9h7v1h-7zM5 10h4v1h-4z"/><path fill="#ffff00" d="M12 6h1v1h-1zM13 7h1v1h-1zM12 8h2v1h-2zM3 9h1v1h-1zM3 10h1v1h-1zM1 11h1v1h-1zM3 11h1v1h-1zM2 12h1v1h-1zM4 12h1v1h-1zM6 12h1v1h-1zM8 12h1v1h-1zM4 13h1v1h-1zM6 13h1v1h-1zM8 13h1v1h-1z"/><path fill="#0000ff" d="M10 10h1v1h-1zM10 11h2v1h-2zM11 12h2v1h-2zM12 13h2v1h-2zM13 14h1v1h-1z"/><path fill="#000080" d="M13 12h1v1h-1zM14 13h1v1h-1zM14 14h1v1h-1zM13 15h2v1h-2z"/></svg>
<svg style="left:417px;top:50px" width="16" height="16" shape-rendering="crispEdges"><path fill="#808080" d="M5 2h4v1h-4zM4 3h1v1h-1zM9 3h1v1h-1zM3 4h1v1h-1zM10 4h1v1h-1zM3 5h1v1h-1zM9 5h3v1h-3zM10 6h1v1h-1zM4 7h10v1h-10zM3 8h11v1h-11zM2 9h2v1h-2zM5 9h3v1h-3zM9 9h5v1h-5zM2 10h1v1h-1zM4 10h1v1h-1zM6 10h1v1h-1zM8 10h6v1h-6zM2 11h2v1h-2zM5 11h1v1h-1zM7 11h7v1h-7zM2 12h3v1h-3zM6 12h7v1h-7zM2 13h11v1h-11zM2 14h10v1h-10z"/><path fill="#ffffff" d="M10 3h1v1h-1zM4 4h1v1h-1zM9 6h1v1h-1zM11 6h1v1h-1zM14 8h1v1h-1zM4 9h1v1h-1zM8 9h1v1h-1zM14 9h1v1h-1zM3 10h1v1h-1zM5 10h1v1h-1zM7 10h1v1h-1zM14 10h1v1h-1zM4 11h1v1h-1zM6 11h1v1h-1zM14 11h1v1h-1zM5 12h1v1h-1zM13 12h2v1h-2zM13 13h1v1h-1zM12 14h1v1h-1zM2 15h11v1h-11z"/></svg>
<svg style="left:970px;top:9px" width="8" height="7" shape-rendering="crispEdges"><path fill="#000000" d="M0 0h2v1h-2zM6 0h2v1h-2zM1 1h2v1h-2zM5 1h2v1h-2zM2 2h4v1h-4zM3 3h2v1h-2zM2 4h4v1h-4zM1 5h2v1h-2zM5 5h2v1h-2zM0 6h2v1h-2zM6 6h2v1h-2z"/></svg>
<div style="left:934px;top:38px;width:6px;height:2px;background:#000;"></div>
<svg style="left:949px;top:31px" width="8" height="9" shape-rendering="crispEdges"><path fill="#000000" d="M3 0h5v1h-5zM3 1h5v1h-5zM3 2h1v1h-1zM7 2h1v1h-1zM0 3h6v1h-6zM7 3h1v1h-1zM0 4h6v1h-6zM7 4h1v1h-1zM0 5h1v1h-1zM5 5h3v1h-3zM0 6h1v1h-1zM5 6h1v1h-1zM0 7h1v1h-1zM5 7h1v1h-1zM0 8h6v1h-6z"/></svg>
<svg style="left:968px;top:32px" width="9" height="8" shape-rendering="crispEdges"><path fill="#808080" d="M0 0h2v1h-2zM6 0h2v1h-2zM1 1h2v1h-2zM5 1h2v1h-2zM2 2h4v1h-4zM3 3h2v1h-2zM2 4h4v1h-4zM1 5h2v1h-2zM5 5h2v1h-2zM0 6h2v1h-2zM6 6h2v1h-2z"/><path fill="#ffffff" d="M3 1h1v1h-1zM7 1h1v1h-1zM6 2h1v1h-1zM5 3h1v1h-1zM6 4h1v1h-1zM3 5h1v1h-1zM7 5h1v1h-1zM2 6h1v1h-1zM8 6h1v1h-1zM1 7h1v1h-1zM7 7h1v1h-1z"/></svg>
<div style="left:6px;top:77px;width:201px;height:563px;overflow:hidden">
<svg style="left:0px;top:0px" width="16" height="16" shape-rendering="crispEdges"><path fill="#808080" d="M7 1h1v1h-1zM6 2h1v1h-1zM5 3h1v1h-1zM4 4h1v1h-1zM3 5h1v1h-1zM2 6h1v1h-1zM1 7h1v1h-1z"/><path fill="#ffffff" d="M8 1h6v1h-6zM7 2h2v1h-2zM6 3h1v1h-1zM5 4h1v1h-1zM4 5h1v1h-1zM3 6h1v1h-1zM2 7h1v1h-1zM5 9h1v1h-1zM6 10h2v1h-2z"/><path fill="#000000" d="M14 1h1v1h-1zM13 2h1v1h-1zM12 3h1v1h-1zM11 4h1v1h-1zM10 5h1v1h-1zM9 6h1v1h-1zM7 7h2v1h-2zM1 8h6v1h-6zM15 8h1v1h-1zM13 9h1v1h-1zM15 9h1v1h-1zM15 10h1v1h-1zM1 11h2v1h-2zM13 11h2v1h-2zM3 12h2v1h-2zM9 12h1v1h-1zM12 12h1v1h-1zM5 13h2v1h-2zM11 13h1v1h-1zM7 14h1v1h-1zM10 14h1v1h-1zM9 15h2v1h-2z"/><path fill="#c0c0c0" d="M9 2h4v1h-4zM7 3h5v1h-5zM6 4h5v1h-5zM5 5h5v1h-5zM4 6h5v1h-5zM3 7h4v1h-4zM12 8h2v1h-2zM14 9h1v1h-1zM9 10h5v1h-5zM8 11h5v1h-5zM8 12h1v1h-1zM10 12h2v1h-2zM8 13h3v1h-3zM8 14h2v1h-2z"/><path fill="#c4c4ec" d="M10 6h2v1h-2zM13 6h1v1h-1zM9 7h1v1h-1zM11 7h3v1h-3zM7 8h1v1h-1zM9 8h3v1h-3zM1 9h1v1h-1zM3 9h2v1h-2zM7 9h1v1h-1zM9 9h1v1h-1zM11 9h2v1h-2zM1 10h2v1h-2zM5 10h1v1h-1zM3 11h1v1h-1zM6 11h1v1h-1zM5 12h1v1h-1zM7 13h1v1h-1z"/><path fill="#ffff00" d="M12 6h1v1h-1zM10 7h1v1h-1zM8 8h1v1h-1zM2 9h1v1h-1zM6 9h1v1h-1zM8 9h1v1h-1zM10 9h1v1h-1zM3 10h2v1h-2zM8 10h1v1h-1zM4 11h2v1h-2zM7 11h1v1h-1zM6 12h2v1h-2z"/></svg>
<div class="t" style="left:21px;top:1px;color:#000;">Active Directory-Benutzer und -Computer</div>
<div style="left:8px;top:16px;width:1px;height:1px;background:#808080;"></div>
<div style="left:8px;top:18px;width:1px;height:1px;background:#808080;"></div>
<div style="left:8px;top:20px;width:1px;height:1px;background:#808080;"></div>
<div style="left:8px;top:22px;width:1px;height:1px;background:#808080;"></div>
<div style="left:8px;top:24px;width:1px;height:1px;background:#808080;"></div>
<div style="left:8px;top:26px;width:1px;height:1px;background:#808080;"></div>
<div style="left:8px;top:28px;width:1px;height:1px;background:#808080;"></div>
<div style="left:8px;top:30px;width:1px;height:1px;background:#808080;"></div>
<div style="left:8px;top:32px;width:1px;height:1px;background:#808080;"></div>
<div style="left:8px;top:34px;width:1px;height:1px;background:#808080;"></div>
<div style="left:8px;top:36px;width:1px;height:1px;background:#808080;"></div>
<div style="left:8px;top:38px;width:1px;height:1px;background:#808080;"></div>
<div style="left:8px;top:40px;width:1px;height:1px;background:#808080;"></div>
<div style="left:4px;top:20px;width:9px;height:9px;background:#808080;"></div>
<div style="left:5px;top:21px;width:7px;height:7px;background:#fff;"></div>
<div style="left:6px;top:24px;width:5px;height:1px;background:#000;"></div>
<div style="left:8px;top:22px;width:1px;height:5px;background:#000;"></div>
<div style="left:14px;top:24px;width:1px;height:1px;background:#808080;"></div>
<div style="left:16px;top:24px;width:1px;height:1px;background:#808080;"></div>
<div style="left:18px;top:24px;width:1px;height:1px;background:#808080;"></div>
<svg style="left:19px;top:16px" width="16" height="14" shape-rendering="crispEdges"><path fill="#808080" d="M3 1h5v1h-5zM2 2h1v1h-1zM8 2h1v1h-1zM1 3h1v1h-1zM9 3h6v1h-6zM1 4h1v1h-1zM14 4h1v1h-1zM1 5h1v1h-1zM14 5h1v1h-1zM1 6h1v1h-1zM14 6h1v1h-1zM1 7h1v1h-1zM14 7h1v1h-1zM1 8h1v1h-1zM14 8h1v1h-1zM1 9h1v1h-1zM14 9h1v1h-1zM1 10h1v1h-1zM14 10h1v1h-1zM1 11h1v1h-1zM14 11h1v1h-1zM1 12h14v1h-14z"/><path fill="#ffff00" d="M3 2h1v1h-1zM5 2h1v1h-1zM7 2h1v1h-1zM4 3h1v1h-1zM6 3h1v1h-1zM8 3h1v1h-1zM3 5h1v1h-1zM5 5h1v1h-1zM7 5h1v1h-1zM9 5h1v1h-1zM11 5h1v1h-1zM13 5h1v1h-1zM4 6h1v1h-1zM6 6h1v1h-1zM8 6h1v1h-1zM10 6h1v1h-1zM12 6h1v1h-1zM3 7h1v1h-1zM5 7h1v1h-1zM7 7h1v1h-1zM9 7h1v1h-1zM11 7h1v1h-1zM13 7h1v1h-1zM4 8h1v1h-1zM6 8h1v1h-1zM8 8h1v1h-1zM10 8h1v1h-1zM12 8h1v1h-1zM3 9h1v1h-1zM5 9h1v1h-1zM7 9h1v1h-1zM9 9h1v1h-1zM11 9h1v1h-1zM13 9h1v1h-1zM4 10h1v1h-1zM6 10h1v1h-1zM8 10h1v1h-1zM10 10h1v1h-1zM12 10h1v1h-1zM3 11h1v1h-1zM5 11h1v1h-1zM7 11h1v1h-1zM9 11h1v1h-1zM11 11h1v1h-1zM13 11h1v1h-1z"/><path fill="#c0c0c0" d="M4 2h1v1h-1zM6 2h1v1h-1zM3 3h1v1h-1zM5 3h1v1h-1zM7 3h1v1h-1zM4 5h1v1h-1zM6 5h1v1h-1zM8 5h1v1h-1zM10 5h1v1h-1zM12 5h1v1h-1zM3 6h1v1h-1zM5 6h1v1h-1zM7 6h1v1h-1zM9 6h1v1h-1zM11 6h1v1h-1zM13 6h1v1h-1zM4 7h1v1h-1zM6 7h1v1h-1zM8 7h1v1h-1zM10 7h1v1h-1zM12 7h1v1h-1zM3 8h1v1h-1zM5 8h1v1h-1zM7 8h1v1h-1zM9 8h1v1h-1zM11 8h1v1h-1zM13 8h1v1h-1zM4 9h1v1h-1zM6 9h1v1h-1zM8 9h1v1h-1zM10 9h1v1h-1zM12 9h1v1h-1zM3 10h1v1h-1zM5 10h1v1h-1zM7 10h1v1h-1zM9 10h1v1h-1zM11 10h1v1h-1zM13 10h1v1h-1zM4 11h1v1h-1zM6 11h1v1h-1zM8 11h1v1h-1zM10 11h1v1h-1zM12 11h1v1h-1z"/><path fill="#ffffff" d="M2 3h1v1h-1zM2 4h12v1h-12zM2 5h1v1h-1zM2 6h1v1h-1zM2 7h1v1h-1zM2 8h1v1h-1zM2 9h1v1h-1zM2 10h1v1h-1zM2 11h1v1h-1z"/><path fill="#000000" d="M15 4h1v1h-1zM15 5h1v1h-1zM15 6h1v1h-1zM15 7h1v1h-1zM15 8h1v1h-1zM15 9h1v1h-1zM15 10h1v1h-1zM15 11h1v1h-1zM15 12h1v1h-1zM2 13h14v1h-14z"/></svg>
<div class="t" style="left:39px;top:17px;color:#000;">Gespeicherte Abfragen</div>
<div style="left:4px;top:36px;width:9px;height:9px;background:#808080;"></div>
<div style="left:5px;top:37px;width:7px;height:7px;background:#fff;"></div>
<div style="left:6px;top:40px;width:5px;height:1px;background:#000;"></div>
<div style="left:14px;top:40px;width:1px;height:1px;background:#808080;"></div>
<div style="left:16px;top:40px;width:1px;height:1px;background:#808080;"></div>
<div style="left:18px;top:40px;width:1px;height:1px;background:#808080;"></div>
<svg style="left:19px;top:32px" width="16" height="16" shape-rendering="crispEdges"><path fill="#808080" d="M10 0h5v1h-5zM2 1h6v1h-6zM9 1h1v1h-1zM14 1h1v1h-1zM1 2h1v1h-1zM7 2h1v1h-1zM9 2h1v1h-1zM14 2h1v1h-1zM1 3h1v1h-1zM7 3h1v1h-1zM9 3h5v1h-5zM1 4h7v1h-7zM9 4h1v1h-1zM13 4h2v1h-2zM1 5h1v1h-1zM5 5h5v1h-5zM14 5h1v1h-1zM1 6h1v1h-1zM4 6h2v1h-2zM10 6h1v1h-1zM13 6h1v1h-1zM1 7h1v1h-1zM4 7h1v1h-1zM10 7h1v1h-1zM1 8h1v1h-1zM4 8h7v1h-7zM14 8h1v1h-1zM1 9h1v1h-1zM4 9h1v1h-1zM9 9h1v1h-1zM14 9h1v1h-1zM1 10h1v1h-1zM4 10h1v1h-1zM9 10h1v1h-1zM4 11h1v1h-1zM9 11h1v1h-1zM4 12h1v1h-1zM9 12h1v1h-1zM4 13h1v1h-1zM9 13h1v1h-1zM4 14h6v1h-6z"/><path fill="#ffffff" d="M10 1h4v1h-4zM2 2h5v1h-5zM10 2h4v1h-4zM2 3h5v1h-5zM10 4h3v1h-3zM2 5h3v1h-3zM10 5h4v1h-4zM6 6h4v1h-4zM5 7h5v1h-5zM5 9h4v1h-4z"/><path fill="#000000" d="M15 1h1v1h-1zM8 2h1v1h-1zM15 2h1v1h-1zM8 3h1v1h-1zM14 3h2v1h-2zM8 4h1v1h-1zM15 4h1v1h-1zM15 5h1v1h-1zM11 6h1v1h-1zM15 6h1v1h-1zM11 7h1v1h-1zM15 7h1v1h-1zM11 8h1v1h-1zM15 8h1v1h-1zM10 9h2v1h-2zM15 9h1v1h-1zM10 10h2v1h-2zM14 10h2v1h-2zM1 11h3v1h-3zM10 11h5v1h-5zM10 12h1v1h-1zM10 13h1v1h-1zM10 14h1v1h-1zM5 15h6v1h-6z"/><path fill="#c0c0c0" d="M2 6h2v1h-2zM12 6h1v1h-1zM14 6h1v1h-1zM2 7h2v1h-2zM12 7h1v1h-1zM14 7h1v1h-1zM2 8h2v1h-2zM12 8h2v1h-2zM2 9h1v1h-1zM12 9h2v1h-2zM2 10h2v1h-2zM5 10h4v1h-4zM12 10h2v1h-2zM5 11h4v1h-4zM5 12h4v1h-4zM5 13h4v1h-4z"/><path fill="#ff0000" d="M13 7h1v1h-1zM3 9h1v1h-1z"/></svg>
<div class="t" style="left:39px;top:33px;color:#000;">mydomain.local</div>
<div style="left:27px;top:49px;width:1px;height:1px;background:#808080;"></div>
<div style="left:27px;top:51px;width:1px;height:1px;background:#808080;"></div>
<div style="left:27px;top:53px;width:1px;height:1px;background:#808080;"></div>
<div style="left:27px;top:55px;width:1px;height:1px;background:#808080;"></div>
<div style="left:27px;top:57px;width:1px;height:1px;background:#808080;"></div>
<div style="left:27px;top:59px;width:1px;height:1px;background:#808080;"></div>
<div style="left:27px;top:61px;width:1px;height:1px;background:#808080;"></div>
<div style="left:27px;top:63px;width:1px;height:1px;background:#808080;"></div>
<div style="left:27px;top:65px;width:1px;height:1px;background:#808080;"></div>
<div style="left:27px;top:67px;width:1px;height:1px;background:#808080;"></div>
<div style="left:27px;top:69px;width:1px;height:1px;background:#808080;"></div>
<div style="left:27px;top:71px;width:1px;height:1px;background:#808080;"></div>
<div style="left:27px;top:73px;width:1px;height:1px;background:#808080;"></div>
<div style="left:27px;top:75px;width:1px;height:1px;background:#808080;"></div>
<div style="left:27px;top:77px;width:1px;height:1px;background:#808080;"></div>
<div style="left:27px;top:79px;width:1px;height:1px;background:#808080;"></div>
<div style="left:27px;top:81px;width:1px;height:1px;background:#808080;"></div>
<div style="left:27px;top:83px;width:1px;height:1px;background:#808080;"></div>
<div style="left:27px;top:85px;width:1px;height:1px;background:#808080;"></div>
<div style="left:27px;top:87px;width:1px;height:1px;background:#808080;"></div>
<div style="left:27px;top:89px;width:1px;height:1px;background:#808080;"></div>
<div style="left:27px;top:91px;width:1px;height:1px;background:#808080;"></div>
<div style="left:27px;top:93px;width:1px;height:1px;background:#808080;"></div>
<div style="left:27px;top:95px;width:1px;height:1px;background:#808080;"></div>
<div style="left:27px;top:97px;width:1px;height:1px;background:#808080;"></div>
<div style="left:27px;top:99px;width:1px;height:1px;background:#808080;"></div>
<div style="left:27px;top:101px;width:1px;height:1px;background:#808080;"></div>
<div style="left:27px;top:103px;width:1px;height:1px;background:#808080;"></div>
<div style="left:27px;top:105px;width:1px;height:1px;background:#808080;"></div>
<div style="left:27px;top:107px;width:1px;height:1px;background:#808080;"></div>
<div style="left:27px;top:109px;width:1px;height:1px;background:#808080;"></div>
<div style="left:27px;top:111px;width:1px;height:1px;background:#808080;"></div>
<div style="left:27px;top:113px;width:1px;height:1px;background:#808080;"></div>
<div style="left:27px;top:115px;width:1px;height:1px;background:#808080;"></div>
<div style="left:27px;top:117px;width:1px;height:1px;background:#808080;"></div>
<div style="left:27px;top:119px;width:1px;height:1px;background:#808080;"></div>
<div style="left:23px;top:52px;width:9px;height:9px;background:#808080;"></div>
<div style="left:24px;top:53px;width:7px;height:7px;background:#fff;"></div>
<div style="left:25px;top:56px;width:5px;height:1px;background:#000;"></div>
<div style="left:27px;top:54px;width:1px;height:5px;background:#000;"></div>
<div style="left:33px;top:56px;width:1px;height:1px;background:#808080;"></div>
<div style="left:35px;top:56px;width:1px;height:1px;background:#808080;"></div>
<div style="left:37px;top:56px;width:1px;height:1px;background:#808080;"></div>
<svg style="left:38px;top:48px" width="16" height="14" shape-rendering="crispEdges"><path fill="#808080" d="M3 1h5v1h-5zM2 2h1v1h-1zM8 2h1v1h-1zM1 3h1v1h-1zM9 3h6v1h-6zM1 4h1v1h-1zM14 4h1v1h-1zM1 5h1v1h-1zM14 5h1v1h-1zM1 6h1v1h-1zM14 6h1v1h-1zM1 7h1v1h-1zM14 7h1v1h-1zM1 8h1v1h-1zM14 8h1v1h-1zM1 9h1v1h-1zM14 9h1v1h-1zM1 10h1v1h-1zM14 10h1v1h-1zM1 11h1v1h-1zM14 11h1v1h-1zM1 12h14v1h-14z"/><path fill="#ffff00" d="M3 2h1v1h-1zM5 2h1v1h-1zM7 2h1v1h-1zM4 3h1v1h-1zM6 3h1v1h-1zM8 3h1v1h-1zM3 5h1v1h-1zM5 5h1v1h-1zM7 5h1v1h-1zM9 5h1v1h-1zM11 5h1v1h-1zM13 5h1v1h-1zM4 6h1v1h-1zM6 6h1v1h-1zM8 6h1v1h-1zM10 6h1v1h-1zM12 6h1v1h-1zM3 7h1v1h-1zM5 7h1v1h-1zM7 7h1v1h-1zM9 7h1v1h-1zM11 7h1v1h-1zM13 7h1v1h-1zM4 8h1v1h-1zM6 8h1v1h-1zM8 8h1v1h-1zM10 8h1v1h-1zM12 8h1v1h-1zM3 9h1v1h-1zM5 9h1v1h-1zM7 9h1v1h-1zM9 9h1v1h-1zM11 9h1v1h-1zM13 9h1v1h-1zM4 10h1v1h-1zM6 10h1v1h-1zM8 10h1v1h-1zM10 10h1v1h-1zM12 10h1v1h-1zM3 11h1v1h-1zM5 11h1v1h-1zM7 11h1v1h-1zM9 11h1v1h-1zM11 11h1v1h-1zM13 11h1v1h-1z"/><path fill="#c0c0c0" d="M4 2h1v1h-1zM6 2h1v1h-1zM3 3h1v1h-1zM5 3h1v1h-1zM7 3h1v1h-1zM4 5h1v1h-1zM6 5h1v1h-1zM8 5h1v1h-1zM10 5h1v1h-1zM12 5h1v1h-1zM3 6h1v1h-1zM5 6h1v1h-1zM7 6h1v1h-1zM9 6h1v1h-1zM11 6h1v1h-1zM13 6h1v1h-1zM4 7h1v1h-1zM6 7h1v1h-1zM8 7h1v1h-1zM10 7h1v1h-1zM12 7h1v1h-1zM3 8h1v1h-1zM5 8h1v1h-1zM7 8h1v1h-1zM9 8h1v1h-1zM11 8h1v1h-1zM13 8h1v1h-1zM4 9h1v1h-1zM6 9h1v1h-1zM8 9h1v1h-1zM10 9h1v1h-1zM12 9h1v1h-1zM3 10h1v1h-1zM5 10h1v1h-1zM7 10h1v1h-1zM9 10h1v1h-1zM11 10h1v1h-1zM13 10h1v1h-1zM4 11h1v1h-1zM6 11h1v1h-1zM8 11h1v1h-1zM10 11h1v1h-1zM12 11h1v1h-1z"/><path fill="#ffffff" d="M2 3h1v1h-1zM2 4h12v1h-12zM2 5h1v1h-1zM2 6h1v1h-1zM2 7h1v1h-1zM2 8h1v1h-1zM2 9h1v1h-1zM2 10h1v1h-1zM2 11h1v1h-1z"/><path fill="#000000" d="M15 4h1v1h-1zM15 5h1v1h-1zM15 6h1v1h-1zM15 7h1v1h-1zM15 8h1v1h-1zM15 9h1v1h-1zM15 10h1v1h-1zM15 11h1v1h-1zM15 12h1v1h-1zM2 13h14v1h-14z"/></svg>
<div class="t" style="left:58px;top:49px;color:#000;">Builtin</div>
<div style="left:29px;top:72px;width:1px;height:1px;background:#808080;"></div>
<div style="left:31px;top:72px;width:1px;height:1px;background:#808080;"></div>
<div style="left:33px;top:72px;width:1px;height:1px;background:#808080;"></div>
<div style="left:35px;top:72px;width:1px;height:1px;background:#808080;"></div>
<div style="left:37px;top:72px;width:1px;height:1px;background:#808080;"></div>
<svg style="left:38px;top:64px" width="16" height="14" shape-rendering="crispEdges"><path fill="#808080" d="M3 1h5v1h-5zM2 2h1v1h-1zM8 2h1v1h-1zM1 3h1v1h-1zM9 3h6v1h-6zM1 4h1v1h-1zM14 4h1v1h-1zM1 5h1v1h-1zM14 5h1v1h-1zM1 6h1v1h-1zM14 6h1v1h-1zM1 7h1v1h-1zM14 7h1v1h-1zM1 8h1v1h-1zM14 8h1v1h-1zM1 9h1v1h-1zM14 9h1v1h-1zM1 10h1v1h-1zM14 10h1v1h-1zM1 11h1v1h-1zM14 11h1v1h-1zM1 12h14v1h-14z"/><path fill="#ffff00" d="M3 2h1v1h-1zM5 2h1v1h-1zM7 2h1v1h-1zM4 3h1v1h-1zM6 3h1v1h-1zM8 3h1v1h-1zM3 5h1v1h-1zM5 5h1v1h-1zM7 5h1v1h-1zM9 5h1v1h-1zM11 5h1v1h-1zM13 5h1v1h-1zM4 6h1v1h-1zM6 6h1v1h-1zM8 6h1v1h-1zM10 6h1v1h-1zM12 6h1v1h-1zM3 7h1v1h-1zM5 7h1v1h-1zM7 7h1v1h-1zM9 7h1v1h-1zM11 7h1v1h-1zM13 7h1v1h-1zM4 8h1v1h-1zM6 8h1v1h-1zM8 8h1v1h-1zM10 8h1v1h-1zM12 8h1v1h-1zM3 9h1v1h-1zM5 9h1v1h-1zM7 9h1v1h-1zM9 9h1v1h-1zM11 9h1v1h-1zM13 9h1v1h-1zM4 10h1v1h-1zM6 10h1v1h-1zM8 10h1v1h-1zM10 10h1v1h-1zM12 10h1v1h-1zM3 11h1v1h-1zM5 11h1v1h-1zM7 11h1v1h-1zM9 11h1v1h-1zM11 11h1v1h-1zM13 11h1v1h-1z"/><path fill="#c0c0c0" d="M4 2h1v1h-1zM6 2h1v1h-1zM3 3h1v1h-1zM5 3h1v1h-1zM7 3h1v1h-1zM4 5h1v1h-1zM6 5h1v1h-1zM8 5h1v1h-1zM10 5h1v1h-1zM12 5h1v1h-1zM3 6h1v1h-1zM5 6h1v1h-1zM7 6h1v1h-1zM9 6h1v1h-1zM11 6h1v1h-1zM13 6h1v1h-1zM4 7h1v1h-1zM6 7h1v1h-1zM8 7h1v1h-1zM10 7h1v1h-1zM12 7h1v1h-1zM3 8h1v1h-1zM5 8h1v1h-1zM7 8h1v1h-1zM9 8h1v1h-1zM11 8h1v1h-1zM13 8h1v1h-1zM4 9h1v1h-1zM6 9h1v1h-1zM8 9h1v1h-1zM10 9h1v1h-1zM12 9h1v1h-1zM3 10h1v1h-1zM5 10h1v1h-1zM7 10h1v1h-1zM9 10h1v1h-1zM11 10h1v1h-1zM13 10h1v1h-1zM4 11h1v1h-1zM6 11h1v1h-1zM8 11h1v1h-1zM10 11h1v1h-1zM12 11h1v1h-1z"/><path fill="#ffffff" d="M2 3h1v1h-1zM2 4h12v1h-12zM2 5h1v1h-1zM2 6h1v1h-1zM2 7h1v1h-1zM2 8h1v1h-1zM2 9h1v1h-1zM2 10h1v1h-1zM2 11h1v1h-1z"/><path fill="#000000" d="M15 4h1v1h-1zM15 5h1v1h-1zM15 6h1v1h-1zM15 7h1v1h-1zM15 8h1v1h-1zM15 9h1v1h-1zM15 10h1v1h-1zM15 11h1v1h-1zM15 12h1v1h-1zM2 13h14v1h-14z"/></svg>
<div class="t" style="left:58px;top:65px;color:#000;">Computers</div>
<div style="left:23px;top:84px;width:9px;height:9px;background:#808080;"></div>
<div style="left:24px;top:85px;width:7px;height:7px;background:#fff;"></div>
<div style="left:25px;top:88px;width:5px;height:1px;background:#000;"></div>
<div style="left:27px;top:86px;width:1px;height:5px;background:#000;"></div>
<div style="left:33px;top:88px;width:1px;height:1px;background:#808080;"></div>
<div style="left:35px;top:88px;width:1px;height:1px;background:#808080;"></div>
<div style="left:37px;top:88px;width:1px;height:1px;background:#808080;"></div>
<svg style="left:38px;top:80px" width="16" height="14" shape-rendering="crispEdges"><path fill="#808000" d="M2 1h5v1h-5zM1 2h1v1h-1zM7 2h1v1h-1zM0 3h14v1h-14zM0 4h1v1h-1zM14 4h1v1h-1zM0 5h1v1h-1zM14 5h1v1h-1zM0 6h1v1h-1zM14 6h1v1h-1zM0 7h1v1h-1zM14 7h1v1h-1zM0 8h1v1h-1zM14 8h1v1h-1zM0 9h1v1h-1zM14 9h1v1h-1zM0 10h1v1h-1zM14 10h1v1h-1zM0 11h1v1h-1zM14 11h1v1h-1zM0 12h15v1h-15z"/><path fill="#ffffff" d="M2 2h5v1h-5zM9 5h3v1h-3zM8 6h3v1h-3zM7 7h3v1h-3zM6 8h3v1h-3z"/><path fill="#ffff80" d="M1 4h8v1h-8zM13 4h1v1h-1zM1 5h7v1h-7zM13 5h1v1h-1zM1 6h6v1h-6zM13 6h1v1h-1zM1 7h5v1h-5zM13 7h1v1h-1zM1 8h4v1h-4zM13 8h1v1h-1zM1 9h3v1h-3zM12 9h2v1h-2zM1 10h3v1h-3zM11 10h3v1h-3zM1 11h4v1h-4zM10 11h4v1h-4z"/><path fill="#000000" d="M9 4h4v1h-4zM15 4h1v1h-1zM8 5h1v1h-1zM12 5h1v1h-1zM15 5h1v1h-1zM7 6h1v1h-1zM11 6h2v1h-2zM15 6h1v1h-1zM6 7h1v1h-1zM10 7h1v1h-1zM12 7h1v1h-1zM15 7h1v1h-1zM5 8h1v1h-1zM9 8h1v1h-1zM12 8h1v1h-1zM15 8h1v1h-1zM4 9h5v1h-5zM11 9h1v1h-1zM15 9h1v1h-1zM4 10h1v1h-1zM7 10h1v1h-1zM9 10h2v1h-2zM15 10h1v1h-1zM5 11h1v1h-1zM8 11h2v1h-2zM15 11h1v1h-1zM15 12h1v1h-1zM1 13h15v1h-15z"/><path fill="#c0c0c0" d="M11 7h1v1h-1zM10 8h2v1h-2zM9 9h2v1h-2zM8 10h1v1h-1z"/><path fill="#ffff00" d="M5 10h2v1h-2zM6 11h2v1h-2z"/></svg>
<div class="t" style="left:58px;top:81px;color:#000;">Domain Controllers</div>
<div style="left:23px;top:100px;width:9px;height:9px;background:#808080;"></div>
<div style="left:24px;top:101px;width:7px;height:7px;background:#fff;"></div>
<div style="left:25px;top:104px;width:5px;height:1px;background:#000;"></div>
<div style="left:27px;top:102px;width:1px;height:5px;background:#000;"></div>
<div style="left:33px;top:104px;width:1px;height:1px;background:#808080;"></div>
<div style="left:35px;top:104px;width:1px;height:1px;background:#808080;"></div>
<div style="left:37px;top:104px;width:1px;height:1px;background:#808080;"></div>
<svg style="left:38px;top:96px" width="16" height="14" shape-rendering="crispEdges"><path fill="#808080" d="M3 1h5v1h-5zM2 2h1v1h-1zM8 2h1v1h-1zM1 3h1v1h-1zM9 3h6v1h-6zM1 4h1v1h-1zM14 4h1v1h-1zM1 5h1v1h-1zM14 5h1v1h-1zM1 6h1v1h-1zM14 6h1v1h-1zM1 7h1v1h-1zM14 7h1v1h-1zM1 8h1v1h-1zM14 8h1v1h-1zM1 9h1v1h-1zM14 9h1v1h-1zM1 10h1v1h-1zM14 10h1v1h-1zM1 11h1v1h-1zM14 11h1v1h-1zM1 12h14v1h-14z"/><path fill="#ffff00" d="M3 2h1v1h-1zM5 2h1v1h-1zM7 2h1v1h-1zM4 3h1v1h-1zM6 3h1v1h-1zM8 3h1v1h-1zM3 5h1v1h-1zM5 5h1v1h-1zM7 5h1v1h-1zM9 5h1v1h-1zM11 5h1v1h-1zM13 5h1v1h-1zM4 6h1v1h-1zM6 6h1v1h-1zM8 6h1v1h-1zM10 6h1v1h-1zM12 6h1v1h-1zM3 7h1v1h-1zM5 7h1v1h-1zM7 7h1v1h-1zM9 7h1v1h-1zM11 7h1v1h-1zM13 7h1v1h-1zM4 8h1v1h-1zM6 8h1v1h-1zM8 8h1v1h-1zM10 8h1v1h-1zM12 8h1v1h-1zM3 9h1v1h-1zM5 9h1v1h-1zM7 9h1v1h-1zM9 9h1v1h-1zM11 9h1v1h-1zM13 9h1v1h-1zM4 10h1v1h-1zM6 10h1v1h-1zM8 10h1v1h-1zM10 10h1v1h-1zM12 10h1v1h-1zM3 11h1v1h-1zM5 11h1v1h-1zM7 11h1v1h-1zM9 11h1v1h-1zM11 11h1v1h-1zM13 11h1v1h-1z"/><path fill="#c0c0c0" d="M4 2h1v1h-1zM6 2h1v1h-1zM3 3h1v1h-1zM5 3h1v1h-1zM7 3h1v1h-1zM4 5h1v1h-1zM6 5h1v1h-1zM8 5h1v1h-1zM10 5h1v1h-1zM12 5h1v1h-1zM3 6h1v1h-1zM5 6h1v1h-1zM7 6h1v1h-1zM9 6h1v1h-1zM11 6h1v1h-1zM13 6h1v1h-1zM4 7h1v1h-1zM6 7h1v1h-1zM8 7h1v1h-1zM10 7h1v1h-1zM12 7h1v1h-1zM3 8h1v1h-1zM5 8h1v1h-1zM7 8h1v1h-1zM9 8h1v1h-1zM11 8h1v1h-1zM13 8h1v1h-1zM4 9h1v1h-1zM6 9h1v1h-1zM8 9h1v1h-1zM10 9h1v1h-1zM12 9h1v1h-1zM3 10h1v1h-1zM5 10h1v1h-1zM7 10h1v1h-1zM9 10h1v1h-1zM11 10h1v1h-1zM13 10h1v1h-1zM4 11h1v1h-1zM6 11h1v1h-1zM8 11h1v1h-1zM10 11h1v1h-1zM12 11h1v1h-1z"/><path fill="#ffffff" d="M2 3h1v1h-1zM2 4h12v1h-12zM2 5h1v1h-1zM2 6h1v1h-1zM2 7h1v1h-1zM2 8h1v1h-1zM2 9h1v1h-1zM2 10h1v1h-1zM2 11h1v1h-1z"/><path fill="#000000" d="M15 4h1v1h-1zM15 5h1v1h-1zM15 6h1v1h-1zM15 7h1v1h-1zM15 8h1v1h-1zM15 9h1v1h-1zM15 10h1v1h-1zM15 11h1v1h-1zM15 12h1v1h-1zM2 13h14v1h-14z"/></svg>
<div class="t" style="left:58px;top:97px;color:#000;">ForeignSecurityPrincipals</div>
<div style="left:29px;top:120px;width:1px;height:1px;background:#808080;"></div>
<div style="left:31px;top:120px;width:1px;height:1px;background:#808080;"></div>
<div style="left:33px;top:120px;width:1px;height:1px;background:#808080;"></div>
<div style="left:35px;top:120px;width:1px;height:1px;background:#808080;"></div>
<div style="left:37px;top:120px;width:1px;height:1px;background:#808080;"></div>
<svg style="left:38px;top:112px" width="17" height="14" shape-rendering="crispEdges"><path fill="#808080" d="M3 1h5v1h-5zM2 2h1v1h-1zM8 2h1v1h-1zM1 3h1v1h-1zM9 3h7v1h-7zM1 4h1v1h-1zM14 4h1v1h-1zM1 5h1v1h-1zM14 5h1v1h-1zM0 6h12v1h-12zM15 6h1v1h-1zM0 7h1v1h-1zM14 7h1v1h-1zM1 8h1v1h-1zM14 8h1v1h-1zM1 9h1v1h-1zM14 9h1v1h-1zM2 10h1v1h-1zM2 11h1v1h-1zM3 12h12v1h-12z"/><path fill="#ffffff" d="M3 2h5v1h-5zM2 3h1v1h-1zM2 4h1v1h-1zM10 4h4v1h-4zM2 5h1v1h-1zM1 7h12v1h-12zM2 8h1v1h-1zM2 9h1v1h-1zM3 11h1v1h-1z"/><path fill="#ffff00" d="M3 3h1v1h-1zM5 3h1v1h-1zM7 3h1v1h-1zM4 4h1v1h-1zM6 4h1v1h-1zM8 4h1v1h-1zM3 5h1v1h-1zM5 5h1v1h-1zM7 5h1v1h-1zM9 5h1v1h-1zM11 5h1v1h-1zM13 5h1v1h-1zM14 6h1v1h-1zM3 8h1v1h-1zM5 8h1v1h-1zM7 8h1v1h-1zM9 8h1v1h-1zM11 8h1v1h-1zM4 9h1v1h-1zM6 9h1v1h-1zM8 9h1v1h-1zM10 9h1v1h-1zM12 9h1v1h-1zM3 10h1v1h-1zM5 10h1v1h-1zM7 10h1v1h-1zM9 10h1v1h-1zM11 10h1v1h-1zM13 10h1v1h-1zM5 11h1v1h-1zM7 11h1v1h-1zM9 11h1v1h-1zM11 11h1v1h-1zM13 11h1v1h-1z"/><path fill="#c0c0c0" d="M4 3h1v1h-1zM6 3h1v1h-1zM8 3h1v1h-1zM3 4h1v1h-1zM5 4h1v1h-1zM7 4h1v1h-1zM9 4h1v1h-1zM4 5h1v1h-1zM6 5h1v1h-1zM8 5h1v1h-1zM10 5h1v1h-1zM12 5h1v1h-1zM13 6h1v1h-1zM4 8h1v1h-1zM6 8h1v1h-1zM8 8h1v1h-1zM10 8h1v1h-1zM12 8h1v1h-1zM3 9h1v1h-1zM5 9h1v1h-1zM7 9h1v1h-1zM9 9h1v1h-1zM11 9h1v1h-1zM13 9h1v1h-1zM4 10h1v1h-1zM6 10h1v1h-1zM8 10h1v1h-1zM10 10h1v1h-1zM12 10h1v1h-1zM4 11h1v1h-1zM6 11h1v1h-1zM8 11h1v1h-1zM10 11h1v1h-1zM12 11h1v1h-1zM14 11h1v1h-1z"/><path fill="#000000" d="M15 4h1v1h-1zM15 5h1v1h-1zM12 6h1v1h-1zM16 6h1v1h-1zM13 7h1v1h-1zM15 7h1v1h-1zM13 8h1v1h-1zM15 8h1v1h-1zM15 9h1v1h-1zM14 10h2v1h-2zM15 11h1v1h-1zM15 12h1v1h-1zM4 13h12v1h-12z"/></svg>
<div style="left:57px;top:112px;width:31px;height:16px;background:#0a246a;"></div>
<div style="left:57px;top:112px;width:1px;height:1px;background:#ffc060;"></div>
<div style="left:57px;top:127px;width:1px;height:1px;background:#ffc060;"></div>
<div style="left:59px;top:112px;width:1px;height:1px;background:#ffc060;"></div>
<div style="left:59px;top:127px;width:1px;height:1px;background:#ffc060;"></div>
<div style="left:61px;top:112px;width:1px;height:1px;background:#ffc060;"></div>
<div style="left:61px;top:127px;width:1px;height:1px;background:#ffc060;"></div>
<div style="left:63px;top:112px;width:1px;height:1px;background:#ffc060;"></div>
<div style="left:63px;top:127px;width:1px;height:1px;background:#ffc060;"></div>
<div style="left:65px;top:112px;width:1px;height:1px;background:#ffc060;"></div>
<div style="left:65px;top:127px;width:1px;height:1px;background:#ffc060;"></div>
<div style="left:67px;top:112px;width:1px;height:1px;background:#ffc060;"></div>
<div style="left:67px;top:127px;width:1px;height:1px;background:#ffc060;"></div>
<div style="left:69px;top:112px;width:1px;height:1px;background:#ffc060;"></div>
<div style="left:69px;top:127px;width:1px;height:1px;background:#ffc060;"></div>
<div style="left:71px;top:112px;width:1px;height:1px;background:#ffc060;"></div>
<div style="left:71px;top:127px;width:1px;height:1px;background:#ffc060;"></div>
<div style="left:73px;top:112px;width:1px;height:1px;background:#ffc060;"></div>
<div style="left:73px;top:127px;width:1px;height:1px;background:#ffc060;"></div>
<div style="left:75px;top:112px;width:1px;height:1px;background:#ffc060;"></div>
<div style="left:75px;top:127px;width:1px;height:1px;background:#ffc060;"></div>
<div style="left:77px;top:112px;width:1px;height:1px;background:#ffc060;"></div>
<div style="left:77px;top:127px;width:1px;height:1px;background:#ffc060;"></div>
<div style="left:79px;top:112px;width:1px;height:1px;background:#ffc060;"></div>
<div style="left:79px;top:127px;width:1px;height:1px;background:#ffc060;"></div>
<div style="left:81px;top:112px;width:1px;height:1px;background:#ffc060;"></div>
<div style="left:81px;top:127px;width:1px;height:1px;background:#ffc060;"></div>
<div style="left:83px;top:112px;width:1px;height:1px;background:#ffc060;"></div>
<div style="left:83px;top:127px;width:1px;height:1px;background:#ffc060;"></div>
<div style="left:85px;top:112px;width:1px;height:1px;background:#ffc060;"></div>
<div style="left:85px;top:127px;width:1px;height:1px;background:#ffc060;"></div>
<div style="left:87px;top:112px;width:1px;height:1px;background:#ffc060;"></div>
<div style="left:87px;top:127px;width:1px;height:1px;background:#ffc060;"></div>
<div style="left:57px;top:112px;width:1px;height:1px;background:#ffc060;"></div>
<div style="left:87px;top:112px;width:1px;height:1px;background:#ffc060;"></div>
<div style="left:57px;top:114px;width:1px;height:1px;background:#ffc060;"></div>
<div style="left:87px;top:114px;width:1px;height:1px;background:#ffc060;"></div>
<div style="left:57px;top:116px;width:1px;height:1px;background:#ffc060;"></div>
<div style="left:87px;top:116px;width:1px;height:1px;background:#ffc060;"></div>
<div style="left:57px;top:118px;width:1px;height:1px;background:#ffc060;"></div>
<div style="left:87px;top:118px;width:1px;height:1px;background:#ffc060;"></div>
<div style="left:57px;top:120px;width:1px;height:1px;background:#ffc060;"></div>
<div style="left:87px;top:120px;width:1px;height:1px;background:#ffc060;"></div>
<div style="left:57px;top:122px;width:1px;height:1px;background:#ffc060;"></div>
<div style="left:87px;top:122px;width:1px;height:1px;background:#ffc060;"></div>
<div style="left:57px;top:124px;width:1px;height:1px;background:#ffc060;"></div>
<div style="left:87px;top:124px;width:1px;height:1px;background:#ffc060;"></div>
<div style="left:57px;top:126px;width:1px;height:1px;background:#ffc060;"></div>
<div style="left:87px;top:126px;width:1px;height:1px;background:#ffc060;"></div>
<div class="t" style="left:58px;top:113px;color:#fff;">Users</div>
</div>
<div style="left:6px;top:640px;width:16px;height:16px;background:#d4d0c8;"></div>
<div style="left:6px;top:640px;width:16px;height:1px;background:#d4d0c8;"></div>
<div style="left:6px;top:640px;width:1px;height:16px;background:#d4d0c8;"></div>
<div style="left:7px;top:641px;width:14px;height:1px;background:#ffffff;"></div>
<div style="left:7px;top:641px;width:1px;height:14px;background:#ffffff;"></div>
<div style="left:7px;top:654px;width:14px;height:1px;background:#808080;"></div>
<div style="left:20px;top:641px;width:1px;height:14px;background:#808080;"></div>
<div style="left:6px;top:655px;width:16px;height:1px;background:#404040;"></div>
<div style="left:21px;top:640px;width:1px;height:16px;background:#404040;"></div>
<svg style="left:11px;top:644px" width="5" height="8"><path d="M4 0V7L0 3.5Z" fill="#000"/></svg>
<div style="left:22px;top:640px;width:94px;height:16px;background:#d4d0c8;"></div>
<div style="left:22px;top:640px;width:94px;height:1px;background:#d4d0c8;"></div>
<div style="left:22px;top:640px;width:1px;height:16px;background:#d4d0c8;"></div>
<div style="left:23px;top:641px;width:92px;height:1px;background:#ffffff;"></div>
<div style="left:23px;top:641px;width:1px;height:14px;background:#ffffff;"></div>
<div style="left:23px;top:654px;width:92px;height:1px;background:#808080;"></div>
<div style="left:114px;top:641px;width:1px;height:14px;background:#808080;"></div>
<div style="left:22px;top:655px;width:94px;height:1px;background:#404040;"></div>
<div style="left:115px;top:640px;width:1px;height:16px;background:#404040;"></div>
<div style="left:116px;top:640px;width:75px;height:16px;background:repeating-conic-gradient(#fff 0 25%,#d4d0c8 0 50%) 0 0/2px 2px"></div>
<div style="left:191px;top:640px;width:16px;height:16px;background:#d4d0c8;"></div>
<div style="left:191px;top:640px;width:16px;height:1px;background:#d4d0c8;"></div>
<div style="left:191px;top:640px;width:1px;height:16px;background:#d4d0c8;"></div>
<div style="left:192px;top:641px;width:14px;height:1px;background:#ffffff;"></div>
<div style="left:192px;top:641px;width:1px;height:14px;background:#ffffff;"></div>
<div style="left:192px;top:654px;width:14px;height:1px;background:#808080;"></div>
<div style="left:205px;top:641px;width:1px;height:14px;background:#808080;"></div>
<div style="left:191px;top:655px;width:16px;height:1px;background:#404040;"></div>
<div style="left:206px;top:640px;width:1px;height:16px;background:#404040;"></div>
<svg style="left:197px;top:644px" width="5" height="8"><path d="M0 0V7L4 3.5Z" fill="#000"/></svg>
<div style="left:214px;top:96px;width:157px;height:17px;background:#d4d0c8;"></div>
<div style="left:214px;top:96px;width:157px;height:1px;background:#ffffff;"></div>
<div style="left:214px;top:96px;width:1px;height:17px;background:#ffffff;"></div>
<div style="left:215px;top:111px;width:155px;height:1px;background:#808080;"></div>
<div style="left:369px;top:97px;width:1px;height:15px;background:#808080;"></div>
<div style="left:214px;top:112px;width:157px;height:1px;background:#404040;"></div>
<div style="left:370px;top:96px;width:1px;height:17px;background:#404040;"></div>
<div class="t" style="left:220px;top:97px;color:#000;">Name</div>
<div style="left:371px;top:96px;width:100px;height:17px;background:#d4d0c8;"></div>
<div style="left:371px;top:96px;width:100px;height:1px;background:#ffffff;"></div>
<div style="left:371px;top:96px;width:1px;height:17px;background:#ffffff;"></div>
<div style="left:372px;top:111px;width:98px;height:1px;background:#808080;"></div>
<div style="left:469px;top:97px;width:1px;height:15px;background:#808080;"></div>
<div style="left:371px;top:112px;width:100px;height:1px;background:#404040;"></div>
<div style="left:470px;top:96px;width:1px;height:17px;background:#404040;"></div>
<div class="t" style="left:377px;top:97px;color:#000;">Typ</div>
<div style="left:471px;top:96px;width:147px;height:17px;background:#d4d0c8;"></div>
<div style="left:471px;top:96px;width:147px;height:1px;background:#ffffff;"></div>
<div style="left:471px;top:96px;width:1px;height:17px;background:#ffffff;"></div>
<div style="left:472px;top:111px;width:145px;height:1px;background:#808080;"></div>
<div style="left:471px;top:112px;width:147px;height:1px;background:#404040;"></div>
<div style="left:617px;top:97px;width:1px;height:16px;background:#404040;"></div>
<div class="t" style="left:476px;top:97px;color:#000;">Beschreibung</div>
<div style="left:618px;top:96px;width:364px;height:17px;background:#d4d0c8;"></div>
<div style="left:618px;top:96px;width:364px;height:1px;background:#ffffff;"></div>
<div style="left:618px;top:96px;width:1px;height:17px;background:#ffffff;"></div>
<div style="left:619px;top:111px;width:363px;height:1px;background:#808080;"></div>
<div style="left:618px;top:112px;width:364px;height:1px;background:#404040;"></div>
<svg style="left:216px;top:115px" width="16" height="16" shape-rendering="crispEdges"><path fill="#000000" d="M5 1h7v1h-7zM4 2h9v1h-9zM3 3h10v1h-10zM2 4h7v1h-7zM12 4h1v1h-1zM2 5h6v1h-6zM11 5h1v1h-1zM2 6h4v1h-4zM12 6h1v1h-1zM2 7h4v1h-4zM12 7h1v1h-1zM2 8h5v1h-5zM11 8h1v1h-1zM3 9h4v1h-4zM11 9h1v1h-1zM3 10h3v1h-3zM11 10h1v1h-1zM4 11h1v1h-1zM9 11h1v1h-1z"/><path fill="#ffffff" d="M9 4h3v1h-3zM8 5h3v1h-3zM12 5h1v1h-1zM6 6h4v1h-4zM11 6h1v1h-1zM6 7h6v1h-6zM7 8h4v1h-4zM7 9h4v1h-4zM6 10h5v1h-5zM5 11h4v1h-4zM5 12h4v1h-4z"/><path fill="#0000ff" d="M10 6h1v1h-1zM10 11h1v1h-1zM4 12h1v1h-1zM10 12h1v1h-1zM3 13h2v1h-2zM11 13h1v1h-1z"/><path fill="#000080" d="M3 12h1v1h-1zM9 12h1v1h-1zM11 12h1v1h-1zM2 13h1v1h-1zM5 13h6v1h-6zM12 13h1v1h-1zM3 14h9v1h-9z"/></svg>
<div class="t" style="left:234px;top:116px;color:#000;">Administrator</div>
<div class="t" style="left:376px;top:116px;color:#000;">Benutzer</div>
<div class="t" style="left:476px;top:116px;color:#000;">Vordefiniertes Konto für <span class="e">...</span></div>
<svg style="left:216px;top:132px" width="16" height="16" shape-rendering="crispEdges"><path fill="#000000" d="M8 0h7v1h-7zM7 1h9v1h-9zM3 2h13v1h-13zM2 3h10v1h-10zM14 3h2v1h-2zM1 4h10v1h-10zM15 4h1v1h-1zM0 5h7v1h-7zM9 5h2v1h-2zM15 5h1v1h-1zM0 6h6v1h-6zM10 6h1v1h-1zM15 6h1v1h-1zM0 7h5v1h-5zM10 7h1v1h-1zM14 7h1v1h-1zM0 8h4v1h-4zM10 8h1v1h-1zM14 8h1v1h-1zM1 9h4v1h-4zM9 9h1v1h-1zM13 9h1v1h-1zM1 10h3v1h-3zM9 10h1v1h-1zM1 11h3v1h-3zM9 11h1v1h-1zM2 12h2v1h-2zM8 12h1v1h-1z"/><path fill="#ffffff" d="M12 3h2v1h-2zM11 4h4v1h-4zM7 5h2v1h-2zM11 5h2v1h-2zM14 5h1v1h-1zM6 6h4v1h-4zM11 6h4v1h-4zM5 7h3v1h-3zM9 7h1v1h-1zM11 7h3v1h-3zM4 8h6v1h-6zM11 8h3v1h-3zM5 9h4v1h-4zM10 9h3v1h-3zM4 10h5v1h-5zM10 10h2v1h-2zM4 11h5v1h-5zM10 11h1v1h-1zM4 12h4v1h-4zM4 13h4v1h-4zM4 14h2v1h-2z"/><path fill="#0000ff" d="M13 5h1v1h-1zM8 7h1v1h-1zM13 10h1v1h-1zM12 11h1v1h-1zM14 11h1v1h-1zM10 12h1v1h-1zM12 12h1v1h-1zM14 12h1v1h-1zM2 13h1v1h-1zM8 13h1v1h-1zM10 13h1v1h-1zM12 13h1v1h-1zM1 14h1v1h-1zM8 14h1v1h-1z"/><path fill="#000080" d="M12 10h1v1h-1zM14 10h1v1h-1zM11 11h1v1h-1zM13 11h1v1h-1zM15 11h1v1h-1zM9 12h1v1h-1zM11 12h1v1h-1zM13 12h1v1h-1zM15 12h1v1h-1zM1 13h1v1h-1zM3 13h1v1h-1zM9 13h1v1h-1zM11 13h1v1h-1zM13 13h1v1h-1zM0 14h1v1h-1zM2 14h2v1h-2zM6 14h2v1h-2zM9 14h2v1h-2zM1 15h10v1h-10z"/></svg>
<div class="t" style="left:234px;top:133px;color:#000;">DHCP-Administratoren</div>
<div class="t" style="left:376px;top:133px;color:#000;">Sicherheitsgrup<span class="e">...</span></div>
<div class="t" style="left:476px;top:133px;color:#000;">Mitglieder, die Administra<span class="e">...</span></div>
<svg style="left:216px;top:149px" width="16" height="16" shape-rendering="crispEdges"><path fill="#000000" d="M8 0h7v1h-7zM7 1h9v1h-9zM3 2h13v1h-13zM2 3h10v1h-10zM14 3h2v1h-2zM1 4h10v1h-10zM15 4h1v1h-1zM0 5h7v1h-7zM9 5h2v1h-2zM15 5h1v1h-1zM0 6h6v1h-6zM10 6h1v1h-1zM15 6h1v1h-1zM0 7h5v1h-5zM10 7h1v1h-1zM14 7h1v1h-1zM0 8h4v1h-4zM10 8h1v1h-1zM14 8h1v1h-1zM1 9h4v1h-4zM9 9h1v1h-1zM13 9h1v1h-1zM1 10h3v1h-3zM9 10h1v1h-1zM1 11h3v1h-3zM9 11h1v1h-1zM2 12h2v1h-2zM8 12h1v1h-1z"/><path fill="#ffffff" d="M12 3h2v1h-2zM11 4h4v1h-4zM7 5h2v1h-2zM11 5h2v1h-2zM14 5h1v1h-1zM6 6h4v1h-4zM11 6h4v1h-4zM5 7h3v1h-3zM9 7h1v1h-1zM11 7h3v1h-3zM4 8h6v1h-6zM11 8h3v1h-3zM5 9h4v1h-4zM10 9h3v1h-3zM4 10h5v1h-5zM10 10h2v1h-2zM4 11h5v1h-5zM10 11h1v1h-1zM4 12h4v1h-4zM4 13h4v1h-4zM4 14h2v1h-2z"/><path fill="#0000ff" d="M13 5h1v1h-1zM8 7h1v1h-1zM13 10h1v1h-1zM12 11h1v1h-1zM14 11h1v1h-1zM10 12h1v1h-1zM12 12h1v1h-1zM14 12h1v1h-1zM2 13h1v1h-1zM8 13h1v1h-1zM10 13h1v1h-1zM12 13h1v1h-1zM1 14h1v1h-1zM8 14h1v1h-1z"/><path fill="#000080" d="M12 10h1v1h-1zM14 10h1v1h-1zM11 11h1v1h-1zM13 11h1v1h-1zM15 11h1v1h-1zM9 12h1v1h-1zM11 12h1v1h-1zM13 12h1v1h-1zM15 12h1v1h-1zM1 13h1v1h-1zM3 13h1v1h-1zM9 13h1v1h-1zM11 13h1v1h-1zM13 13h1v1h-1zM0 14h1v1h-1zM2 14h2v1h-2zM6 14h2v1h-2zM9 14h2v1h-2zM1 15h10v1h-10z"/></svg>
<div class="t" style="left:234px;top:150px;color:#000;">DHCP-Benutzer</div>
<div class="t" style="left:376px;top:150px;color:#000;">Sicherheitsgrup<span class="e">...</span></div>
<div class="t" style="left:476px;top:150px;color:#000;">Mitglieder, die nur Lesezu<span class="e">...</span></div>
<svg style="left:216px;top:166px" width="16" height="16" shape-rendering="crispEdges"><path fill="#000000" d="M8 0h7v1h-7zM7 1h9v1h-9zM3 2h13v1h-13zM2 3h10v1h-10zM14 3h2v1h-2zM1 4h10v1h-10zM15 4h1v1h-1zM0 5h7v1h-7zM9 5h2v1h-2zM15 5h1v1h-1zM0 6h6v1h-6zM10 6h1v1h-1zM15 6h1v1h-1zM0 7h5v1h-5zM10 7h1v1h-1zM14 7h1v1h-1zM0 8h4v1h-4zM10 8h1v1h-1zM14 8h1v1h-1zM1 9h4v1h-4zM9 9h1v1h-1zM13 9h1v1h-1zM1 10h3v1h-3zM9 10h1v1h-1zM1 11h3v1h-3zM9 11h1v1h-1zM2 12h2v1h-2zM8 12h1v1h-1z"/><path fill="#ffffff" d="M12 3h2v1h-2zM11 4h4v1h-4zM7 5h2v1h-2zM11 5h2v1h-2zM14 5h1v1h-1zM6 6h4v1h-4zM11 6h4v1h-4zM5 7h3v1h-3zM9 7h1v1h-1zM11 7h3v1h-3zM4 8h6v1h-6zM11 8h3v1h-3zM5 9h4v1h-4zM10 9h3v1h-3zM4 10h5v1h-5zM10 10h2v1h-2zM4 11h5v1h-5zM10 11h1v1h-1zM4 12h4v1h-4zM4 13h4v1h-4zM4 14h2v1h-2z"/><path fill="#0000ff" d="M13 5h1v1h-1zM8 7h1v1h-1zM13 10h1v1h-1zM12 11h1v1h-1zM14 11h1v1h-1zM10 12h1v1h-1zM12 12h1v1h-1zM14 12h1v1h-1zM2 13h1v1h-1zM8 13h1v1h-1zM10 13h1v1h-1zM12 13h1v1h-1zM1 14h1v1h-1zM8 14h1v1h-1z"/><path fill="#000080" d="M12 10h1v1h-1zM14 10h1v1h-1zM11 11h1v1h-1zM13 11h1v1h-1zM15 11h1v1h-1zM9 12h1v1h-1zM11 12h1v1h-1zM13 12h1v1h-1zM15 12h1v1h-1zM1 13h1v1h-1zM3 13h1v1h-1zM9 13h1v1h-1zM11 13h1v1h-1zM13 13h1v1h-1zM0 14h1v1h-1zM2 14h2v1h-2zM6 14h2v1h-2zM9 14h2v1h-2zM1 15h10v1h-10z"/></svg>
<div class="t" style="left:234px;top:167px;color:#000;">DnsAdmins</div>
<div class="t" style="left:376px;top:167px;color:#000;">Sicherheitsgrup<span class="e">...</span></div>
<div class="t" style="left:476px;top:167px;color:#000;">Gruppe &quot;DNS-Administrat<span class="e">...</span></div>
<svg style="left:216px;top:183px" width="16" height="16" shape-rendering="crispEdges"><path fill="#000000" d="M8 0h7v1h-7zM7 1h9v1h-9zM3 2h13v1h-13zM2 3h10v1h-10zM14 3h2v1h-2zM1 4h10v1h-10zM15 4h1v1h-1zM0 5h7v1h-7zM9 5h2v1h-2zM15 5h1v1h-1zM0 6h6v1h-6zM10 6h1v1h-1zM15 6h1v1h-1zM0 7h5v1h-5zM10 7h1v1h-1zM14 7h1v1h-1zM0 8h4v1h-4zM10 8h1v1h-1zM14 8h1v1h-1zM1 9h4v1h-4zM9 9h1v1h-1zM13 9h1v1h-1zM1 10h3v1h-3zM9 10h1v1h-1zM1 11h3v1h-3zM9 11h1v1h-1zM2 12h2v1h-2zM8 12h1v1h-1z"/><path fill="#ffffff" d="M12 3h2v1h-2zM11 4h4v1h-4zM7 5h2v1h-2zM11 5h2v1h-2zM14 5h1v1h-1zM6 6h4v1h-4zM11 6h4v1h-4zM5 7h3v1h-3zM9 7h1v1h-1zM11 7h3v1h-3zM4 8h6v1h-6zM11 8h3v1h-3zM5 9h4v1h-4zM10 9h3v1h-3zM4 10h5v1h-5zM10 10h2v1h-2zM4 11h5v1h-5zM10 11h1v1h-1zM4 12h4v1h-4zM4 13h4v1h-4zM4 14h2v1h-2z"/><path fill="#0000ff" d="M13 5h1v1h-1zM8 7h1v1h-1zM13 10h1v1h-1zM12 11h1v1h-1zM14 11h1v1h-1zM10 12h1v1h-1zM12 12h1v1h-1zM14 12h1v1h-1zM2 13h1v1h-1zM8 13h1v1h-1zM10 13h1v1h-1zM12 13h1v1h-1zM1 14h1v1h-1zM8 14h1v1h-1z"/><path fill="#000080" d="M12 10h1v1h-1zM14 10h1v1h-1zM11 11h1v1h-1zM13 11h1v1h-1zM15 11h1v1h-1zM9 12h1v1h-1zM11 12h1v1h-1zM13 12h1v1h-1zM15 12h1v1h-1zM1 13h1v1h-1zM3 13h1v1h-1zM9 13h1v1h-1zM11 13h1v1h-1zM13 13h1v1h-1zM0 14h1v1h-1zM2 14h2v1h-2zM6 14h2v1h-2zM9 14h2v1h-2zM1 15h10v1h-10z"/></svg>
<div class="t" style="left:234px;top:184px;color:#000;">DnsUpdateProxy</div>
<div class="t" style="left:376px;top:184px;color:#000;">Sicherheitsgrup<span class="e">...</span></div>
<div class="t" style="left:476px;top:184px;color:#000;">DNS-Clients, die dynamis<span class="e">...</span></div>
<svg style="left:216px;top:200px" width="16" height="16" shape-rendering="crispEdges"><path fill="#000000" d="M8 0h7v1h-7zM7 1h9v1h-9zM3 2h13v1h-13zM2 3h10v1h-10zM14 3h2v1h-2zM1 4h10v1h-10zM15 4h1v1h-1zM0 5h7v1h-7zM9 5h2v1h-2zM15 5h1v1h-1zM0 6h6v1h-6zM10 6h1v1h-1zM15 6h1v1h-1zM0 7h5v1h-5zM10 7h1v1h-1zM14 7h1v1h-1zM0 8h4v1h-4zM10 8h1v1h-1zM14 8h1v1h-1zM1 9h4v1h-4zM9 9h1v1h-1zM13 9h1v1h-1zM1 10h3v1h-3zM9 10h1v1h-1zM1 11h3v1h-3zM9 11h1v1h-1zM2 12h2v1h-2zM8 12h1v1h-1z"/><path fill="#ffffff" d="M12 3h2v1h-2zM11 4h4v1h-4zM7 5h2v1h-2zM11 5h2v1h-2zM14 5h1v1h-1zM6 6h4v1h-4zM11 6h4v1h-4zM5 7h3v1h-3zM9 7h1v1h-1zM11 7h3v1h-3zM4 8h6v1h-6zM11 8h3v1h-3zM5 9h4v1h-4zM10 9h3v1h-3zM4 10h5v1h-5zM10 10h2v1h-2zM4 11h5v1h-5zM10 11h1v1h-1zM4 12h4v1h-4zM4 13h4v1h-4zM4 14h2v1h-2z"/><path fill="#0000ff" d="M13 5h1v1h-1zM8 7h1v1h-1zM13 10h1v1h-1zM12 11h1v1h-1zM14 11h1v1h-1zM10 12h1v1h-1zM12 12h1v1h-1zM14 12h1v1h-1zM2 13h1v1h-1zM8 13h1v1h-1zM10 13h1v1h-1zM12 13h1v1h-1zM1 14h1v1h-1zM8 14h1v1h-1z"/><path fill="#000080" d="M12 10h1v1h-1zM14 10h1v1h-1zM11 11h1v1h-1zM13 11h1v1h-1zM15 11h1v1h-1zM9 12h1v1h-1zM11 12h1v1h-1zM13 12h1v1h-1zM15 12h1v1h-1zM1 13h1v1h-1zM3 13h1v1h-1zM9 13h1v1h-1zM11 13h1v1h-1zM13 13h1v1h-1zM0 14h1v1h-1zM2 14h2v1h-2zM6 14h2v1h-2zM9 14h2v1h-2zM1 15h10v1h-10z"/></svg>
<div class="t" style="left:234px;top:201px;color:#000;">Domänen-Admins</div>
<div class="t" style="left:376px;top:201px;color:#000;">Sicherheitsgrup<span class="e">...</span></div>
<div class="t" style="left:476px;top:201px;color:#000;">Administratoren der Dom<span class="e">...</span></div>
<svg style="left:216px;top:217px" width="16" height="16" shape-rendering="crispEdges"><path fill="#000000" d="M8 0h7v1h-7zM7 1h9v1h-9zM3 2h13v1h-13zM2 3h10v1h-10zM14 3h2v1h-2zM1 4h10v1h-10zM15 4h1v1h-1zM0 5h7v1h-7zM9 5h2v1h-2zM15 5h1v1h-1zM0 6h6v1h-6zM10 6h1v1h-1zM15 6h1v1h-1zM0 7h5v1h-5zM10 7h1v1h-1zM14 7h1v1h-1zM0 8h4v1h-4zM10 8h1v1h-1zM14 8h1v1h-1zM1 9h4v1h-4zM9 9h1v1h-1zM13 9h1v1h-1zM1 10h3v1h-3zM9 10h1v1h-1zM1 11h3v1h-3zM9 11h1v1h-1zM2 12h2v1h-2zM8 12h1v1h-1z"/><path fill="#ffffff" d="M12 3h2v1h-2zM11 4h4v1h-4zM7 5h2v1h-2zM11 5h2v1h-2zM14 5h1v1h-1zM6 6h4v1h-4zM11 6h4v1h-4zM5 7h3v1h-3zM9 7h1v1h-1zM11 7h3v1h-3zM4 8h6v1h-6zM11 8h3v1h-3zM5 9h4v1h-4zM10 9h3v1h-3zM4 10h5v1h-5zM10 10h2v1h-2zM4 11h5v1h-5zM10 11h1v1h-1zM4 12h4v1h-4zM4 13h4v1h-4zM4 14h2v1h-2z"/><path fill="#0000ff" d="M13 5h1v1h-1zM8 7h1v1h-1zM13 10h1v1h-1zM12 11h1v1h-1zM14 11h1v1h-1zM10 12h1v1h-1zM12 12h1v1h-1zM14 12h1v1h-1zM2 13h1v1h-1zM8 13h1v1h-1zM10 13h1v1h-1zM12 13h1v1h-1zM1 14h1v1h-1zM8 14h1v1h-1z"/><path fill="#000080" d="M12 10h1v1h-1zM14 10h1v1h-1zM11 11h1v1h-1zM13 11h1v1h-1zM15 11h1v1h-1zM9 12h1v1h-1zM11 12h1v1h-1zM13 12h1v1h-1zM15 12h1v1h-1zM1 13h1v1h-1zM3 13h1v1h-1zM9 13h1v1h-1zM11 13h1v1h-1zM13 13h1v1h-1zM0 14h1v1h-1zM2 14h2v1h-2zM6 14h2v1h-2zM9 14h2v1h-2zM1 15h10v1h-10z"/></svg>
<div class="t" style="left:234px;top:218px;color:#000;">Domänen-Benutzer</div>
<div class="t" style="left:376px;top:218px;color:#000;">Sicherheitsgrup<span class="e">...</span></div>
<div class="t" style="left:476px;top:218px;color:#000;">Alle Benutzer dieser Dom<span class="e">...</span></div>
<svg style="left:216px;top:234px" width="16" height="16" shape-rendering="crispEdges"><path fill="#000000" d="M8 0h7v1h-7zM7 1h9v1h-9zM3 2h13v1h-13zM2 3h10v1h-10zM14 3h2v1h-2zM1 4h10v1h-10zM15 4h1v1h-1zM0 5h7v1h-7zM9 5h2v1h-2zM15 5h1v1h-1zM0 6h6v1h-6zM10 6h1v1h-1zM15 6h1v1h-1zM0 7h5v1h-5zM10 7h1v1h-1zM14 7h1v1h-1zM0 8h4v1h-4zM10 8h1v1h-1zM14 8h1v1h-1zM1 9h4v1h-4zM9 9h1v1h-1zM13 9h1v1h-1zM1 10h3v1h-3zM9 10h1v1h-1zM1 11h3v1h-3zM9 11h1v1h-1zM2 12h2v1h-2zM8 12h1v1h-1z"/><path fill="#ffffff" d="M12 3h2v1h-2zM11 4h4v1h-4zM7 5h2v1h-2zM11 5h2v1h-2zM14 5h1v1h-1zM6 6h4v1h-4zM11 6h4v1h-4zM5 7h3v1h-3zM9 7h1v1h-1zM11 7h3v1h-3zM4 8h6v1h-6zM11 8h3v1h-3zM5 9h4v1h-4zM10 9h3v1h-3zM4 10h5v1h-5zM10 10h2v1h-2zM4 11h5v1h-5zM10 11h1v1h-1zM4 12h4v1h-4zM4 13h4v1h-4zM4 14h2v1h-2z"/><path fill="#0000ff" d="M13 5h1v1h-1zM8 7h1v1h-1zM13 10h1v1h-1zM12 11h1v1h-1zM14 11h1v1h-1zM10 12h1v1h-1zM12 12h1v1h-1zM14 12h1v1h-1zM2 13h1v1h-1zM8 13h1v1h-1zM10 13h1v1h-1zM12 13h1v1h-1zM1 14h1v1h-1zM8 14h1v1h-1z"/><path fill="#000080" d="M12 10h1v1h-1zM14 10h1v1h-1zM11 11h1v1h-1zM13 11h1v1h-1zM15 11h1v1h-1zM9 12h1v1h-1zM11 12h1v1h-1zM13 12h1v1h-1zM15 12h1v1h-1zM1 13h1v1h-1zM3 13h1v1h-1zM9 13h1v1h-1zM11 13h1v1h-1zM13 13h1v1h-1zM0 14h1v1h-1zM2 14h2v1h-2zM6 14h2v1h-2zM9 14h2v1h-2zM1 15h10v1h-10z"/></svg>
<div class="t" style="left:234px;top:235px;color:#000;">Domänencomputer</div>
<div class="t" style="left:376px;top:235px;color:#000;">Sicherheitsgrup<span class="e">...</span></div>
<div class="t" style="left:476px;top:235px;color:#000;">Alle Arbeitsstationen und <span class="e">...</span></div>
<svg style="left:216px;top:251px" width="16" height="16" shape-rendering="crispEdges"><path fill="#000000" d="M8 0h7v1h-7zM7 1h9v1h-9zM3 2h13v1h-13zM2 3h10v1h-10zM14 3h2v1h-2zM1 4h10v1h-10zM15 4h1v1h-1zM0 5h7v1h-7zM9 5h2v1h-2zM15 5h1v1h-1zM0 6h6v1h-6zM10 6h1v1h-1zM15 6h1v1h-1zM0 7h5v1h-5zM10 7h1v1h-1zM14 7h1v1h-1zM0 8h4v1h-4zM10 8h1v1h-1zM14 8h1v1h-1zM1 9h4v1h-4zM9 9h1v1h-1zM13 9h1v1h-1zM1 10h3v1h-3zM9 10h1v1h-1zM1 11h3v1h-3zM9 11h1v1h-1zM2 12h2v1h-2zM8 12h1v1h-1z"/><path fill="#ffffff" d="M12 3h2v1h-2zM11 4h4v1h-4zM7 5h2v1h-2zM11 5h2v1h-2zM14 5h1v1h-1zM6 6h4v1h-4zM11 6h4v1h-4zM5 7h3v1h-3zM9 7h1v1h-1zM11 7h3v1h-3zM4 8h6v1h-6zM11 8h3v1h-3zM5 9h4v1h-4zM10 9h3v1h-3zM4 10h5v1h-5zM10 10h2v1h-2zM4 11h5v1h-5zM10 11h1v1h-1zM4 12h4v1h-4zM4 13h4v1h-4zM4 14h2v1h-2z"/><path fill="#0000ff" d="M13 5h1v1h-1zM8 7h1v1h-1zM13 10h1v1h-1zM12 11h1v1h-1zM14 11h1v1h-1zM10 12h1v1h-1zM12 12h1v1h-1zM14 12h1v1h-1zM2 13h1v1h-1zM8 13h1v1h-1zM10 13h1v1h-1zM12 13h1v1h-1zM1 14h1v1h-1zM8 14h1v1h-1z"/><path fill="#000080" d="M12 10h1v1h-1zM14 10h1v1h-1zM11 11h1v1h-1zM13 11h1v1h-1zM15 11h1v1h-1zM9 12h1v1h-1zM11 12h1v1h-1zM13 12h1v1h-1zM15 12h1v1h-1zM1 13h1v1h-1zM3 13h1v1h-1zM9 13h1v1h-1zM11 13h1v1h-1zM13 13h1v1h-1zM0 14h1v1h-1zM2 14h2v1h-2zM6 14h2v1h-2zM9 14h2v1h-2zM1 15h10v1h-10z"/></svg>
<div class="t" style="left:234px;top:252px;color:#000;">Domänencontroller</div>
<div class="t" style="left:376px;top:252px;color:#000;">Sicherheitsgrup<span class="e">...</span></div>
<div class="t" style="left:476px;top:252px;color:#000;">Alle Domänencontroller d<span class="e">...</span></div>
<svg style="left:216px;top:268px" width="16" height="16" shape-rendering="crispEdges"><path fill="#000000" d="M8 0h7v1h-7zM7 1h9v1h-9zM3 2h13v1h-13zM2 3h10v1h-10zM14 3h2v1h-2zM1 4h10v1h-10zM15 4h1v1h-1zM0 5h7v1h-7zM9 5h2v1h-2zM15 5h1v1h-1zM0 6h6v1h-6zM10 6h1v1h-1zM15 6h1v1h-1zM0 7h5v1h-5zM10 7h1v1h-1zM14 7h1v1h-1zM0 8h4v1h-4zM10 8h1v1h-1zM14 8h1v1h-1zM1 9h4v1h-4zM9 9h1v1h-1zM13 9h1v1h-1zM1 10h3v1h-3zM9 10h1v1h-1zM1 11h3v1h-3zM9 11h1v1h-1zM2 12h2v1h-2zM8 12h1v1h-1z"/><path fill="#ffffff" d="M12 3h2v1h-2zM11 4h4v1h-4zM7 5h2v1h-2zM11 5h2v1h-2zM14 5h1v1h-1zM6 6h4v1h-4zM11 6h4v1h-4zM5 7h3v1h-3zM9 7h1v1h-1zM11 7h3v1h-3zM4 8h6v1h-6zM11 8h3v1h-3zM5 9h4v1h-4zM10 9h3v1h-3zM4 10h5v1h-5zM10 10h2v1h-2zM4 11h5v1h-5zM10 11h1v1h-1zM4 12h4v1h-4zM4 13h4v1h-4zM4 14h2v1h-2z"/><path fill="#0000ff" d="M13 5h1v1h-1zM8 7h1v1h-1zM13 10h1v1h-1zM12 11h1v1h-1zM14 11h1v1h-1zM10 12h1v1h-1zM12 12h1v1h-1zM14 12h1v1h-1zM2 13h1v1h-1zM8 13h1v1h-1zM10 13h1v1h-1zM12 13h1v1h-1zM1 14h1v1h-1zM8 14h1v1h-1z"/><path fill="#000080" d="M12 10h1v1h-1zM14 10h1v1h-1zM11 11h1v1h-1zM13 11h1v1h-1zM15 11h1v1h-1zM9 12h1v1h-1zM11 12h1v1h-1zM13 12h1v1h-1zM15 12h1v1h-1zM1 13h1v1h-1zM3 13h1v1h-1zM9 13h1v1h-1zM11 13h1v1h-1zM13 13h1v1h-1zM0 14h1v1h-1zM2 14h2v1h-2zM6 14h2v1h-2zM9 14h2v1h-2zM1 15h10v1h-10z"/></svg>
<div class="t" style="left:234px;top:269px;color:#000;">Domänen-Gäste</div>
<div class="t" style="left:376px;top:269px;color:#000;">Sicherheitsgrup<span class="e">...</span></div>
<div class="t" style="left:476px;top:269px;color:#000;">Alle Gäste dieser Domäne</div>
<svg style="left:216px;top:285px" width="16" height="16" shape-rendering="crispEdges"><path fill="#000000" d="M5 1h7v1h-7zM4 2h9v1h-9zM3 3h10v1h-10zM2 4h7v1h-7zM12 4h1v1h-1zM2 5h6v1h-6zM11 5h1v1h-1zM2 6h4v1h-4zM12 6h1v1h-1zM2 7h4v1h-4zM12 7h1v1h-1zM2 8h5v1h-5zM11 8h1v1h-1zM3 9h4v1h-4zM11 9h1v1h-1zM3 10h3v1h-3zM11 10h1v1h-1zM4 11h1v1h-1zM9 11h1v1h-1z"/><path fill="#ffffff" d="M9 4h3v1h-3zM8 5h3v1h-3zM12 5h1v1h-1zM6 6h4v1h-4zM11 6h1v1h-1zM6 7h6v1h-6zM7 8h4v1h-4zM7 9h4v1h-4zM6 10h5v1h-5zM5 11h4v1h-4zM5 12h4v1h-4z"/><path fill="#0000ff" d="M10 6h1v1h-1zM10 11h1v1h-1zM4 12h1v1h-1zM10 12h1v1h-1zM3 13h2v1h-2zM11 13h1v1h-1z"/><path fill="#000080" d="M3 12h1v1h-1zM9 12h1v1h-1zM11 12h1v1h-1zM2 13h1v1h-1zM5 13h6v1h-6zM12 13h1v1h-1zM3 14h9v1h-9z"/></svg>
<div class="t" style="left:234px;top:286px;color:#000;">Gast</div>
<div class="t" style="left:376px;top:286px;color:#000;">Benutzer</div>
<div class="t" style="left:476px;top:286px;color:#000;">Vordefiniertes Konto für <span class="e">...</span></div>
<svg style="left:216px;top:302px" width="16" height="16" shape-rendering="crispEdges"><path fill="#000000" d="M8 0h7v1h-7zM7 1h9v1h-9zM3 2h13v1h-13zM2 3h10v1h-10zM14 3h2v1h-2zM1 4h10v1h-10zM15 4h1v1h-1zM0 5h7v1h-7zM9 5h2v1h-2zM15 5h1v1h-1zM0 6h6v1h-6zM10 6h1v1h-1zM15 6h1v1h-1zM0 7h5v1h-5zM10 7h1v1h-1zM14 7h1v1h-1zM0 8h4v1h-4zM10 8h1v1h-1zM14 8h1v1h-1zM1 9h4v1h-4zM9 9h1v1h-1zM13 9h1v1h-1zM1 10h3v1h-3zM9 10h1v1h-1zM1 11h3v1h-3zM9 11h1v1h-1zM2 12h2v1h-2zM8 12h1v1h-1z"/><path fill="#ffffff" d="M12 3h2v1h-2zM11 4h4v1h-4zM7 5h2v1h-2zM11 5h2v1h-2zM14 5h1v1h-1zM6 6h4v1h-4zM11 6h4v1h-4zM5 7h3v1h-3zM9 7h1v1h-1zM11 7h3v1h-3zM4 8h6v1h-6zM11 8h3v1h-3zM5 9h4v1h-4zM10 9h3v1h-3zM4 10h5v1h-5zM10 10h2v1h-2zM4 11h5v1h-5zM10 11h1v1h-1zM4 12h4v1h-4zM4 13h4v1h-4zM4 14h2v1h-2z"/><path fill="#0000ff" d="M13 5h1v1h-1zM8 7h1v1h-1zM13 10h1v1h-1zM12 11h1v1h-1zM14 11h1v1h-1zM10 12h1v1h-1zM12 12h1v1h-1zM14 12h1v1h-1zM2 13h1v1h-1zM8 13h1v1h-1zM10 13h1v1h-1zM12 13h1v1h-1zM1 14h1v1h-1zM8 14h1v1h-1z"/><path fill="#000080" d="M12 10h1v1h-1zM14 10h1v1h-1zM11 11h1v1h-1zM13 11h1v1h-1zM15 11h1v1h-1zM9 12h1v1h-1zM11 12h1v1h-1zM13 12h1v1h-1zM15 12h1v1h-1zM1 13h1v1h-1zM3 13h1v1h-1zM9 13h1v1h-1zM11 13h1v1h-1zM13 13h1v1h-1zM0 14h1v1h-1zM2 14h2v1h-2zM6 14h2v1h-2zM9 14h2v1h-2zM1 15h10v1h-10z"/></svg>
<div class="t" style="left:234px;top:303px;color:#000;">HelpServicesGroup</div>
<div class="t" style="left:376px;top:303px;color:#000;">Sicherheitsgrup<span class="e">...</span></div>
<div class="t" style="left:476px;top:303px;color:#000;">Gruppe für das Hilfe- und<span class="e">...</span></div>
<svg style="left:216px;top:319px" width="16" height="16" shape-rendering="crispEdges"><path fill="#000000" d="M8 0h7v1h-7zM7 1h9v1h-9zM3 2h13v1h-13zM2 3h10v1h-10zM14 3h2v1h-2zM1 4h10v1h-10zM15 4h1v1h-1zM0 5h7v1h-7zM9 5h2v1h-2zM15 5h1v1h-1zM0 6h6v1h-6zM10 6h1v1h-1zM15 6h1v1h-1zM0 7h5v1h-5zM10 7h1v1h-1zM14 7h1v1h-1zM0 8h4v1h-4zM10 8h1v1h-1zM14 8h1v1h-1zM1 9h4v1h-4zM9 9h1v1h-1zM13 9h1v1h-1zM1 10h3v1h-3zM9 10h1v1h-1zM1 11h3v1h-3zM9 11h1v1h-1zM2 12h2v1h-2zM8 12h1v1h-1z"/><path fill="#ffffff" d="M12 3h2v1h-2zM11 4h4v1h-4zM7 5h2v1h-2zM11 5h2v1h-2zM14 5h1v1h-1zM6 6h4v1h-4zM11 6h4v1h-4zM5 7h3v1h-3zM9 7h1v1h-1zM11 7h3v1h-3zM4 8h6v1h-6zM11 8h3v1h-3zM5 9h4v1h-4zM10 9h3v1h-3zM4 10h5v1h-5zM10 10h2v1h-2zM4 11h5v1h-5zM10 11h1v1h-1zM4 12h4v1h-4zM4 13h4v1h-4zM4 14h2v1h-2z"/><path fill="#0000ff" d="M13 5h1v1h-1zM8 7h1v1h-1zM13 10h1v1h-1zM12 11h1v1h-1zM14 11h1v1h-1zM10 12h1v1h-1zM12 12h1v1h-1zM14 12h1v1h-1zM2 13h1v1h-1zM8 13h1v1h-1zM10 13h1v1h-1zM12 13h1v1h-1zM1 14h1v1h-1zM8 14h1v1h-1z"/><path fill="#000080" d="M12 10h1v1h-1zM14 10h1v1h-1zM11 11h1v1h-1zM13 11h1v1h-1zM15 11h1v1h-1zM9 12h1v1h-1zM11 12h1v1h-1zM13 12h1v1h-1zM15 12h1v1h-1zM1 13h1v1h-1zM3 13h1v1h-1zM9 13h1v1h-1zM11 13h1v1h-1zM13 13h1v1h-1zM0 14h1v1h-1zM2 14h2v1h-2zM6 14h2v1h-2zM9 14h2v1h-2zM1 15h10v1h-10z"/></svg>
<div class="t" style="left:234px;top:320px;color:#000;">Organisations-Admins</div>
<div class="t" style="left:376px;top:320px;color:#000;">Sicherheitsgrup<span class="e">...</span></div>
<div class="t" style="left:476px;top:320px;color:#000;">Angegebene Administrat<span class="e">...</span></div>
<svg style="left:216px;top:336px" width="16" height="16" shape-rendering="crispEdges"><path fill="#000000" d="M8 0h7v1h-7zM7 1h9v1h-9zM3 2h13v1h-13zM2 3h10v1h-10zM14 3h2v1h-2zM1 4h10v1h-10zM15 4h1v1h-1zM0 5h7v1h-7zM9 5h2v1h-2zM15 5h1v1h-1zM0 6h6v1h-6zM10 6h1v1h-1zM15 6h1v1h-1zM0 7h5v1h-5zM10 7h1v1h-1zM14 7h1v1h-1zM0 8h4v1h-4zM10 8h1v1h-1zM14 8h1v1h-1zM1 9h4v1h-4zM9 9h1v1h-1zM13 9h1v1h-1zM1 10h3v1h-3zM9 10h1v1h-1zM1 11h3v1h-3zM9 11h1v1h-1zM2 12h2v1h-2zM8 12h1v1h-1z"/><path fill="#ffffff" d="M12 3h2v1h-2zM11 4h4v1h-4zM7 5h2v1h-2zM11 5h2v1h-2zM14 5h1v1h-1zM6 6h4v1h-4zM11 6h4v1h-4zM5 7h3v1h-3zM9 7h1v1h-1zM11 7h3v1h-3zM4 8h6v1h-6zM11 8h3v1h-3zM5 9h4v1h-4zM10 9h3v1h-3zM4 10h5v1h-5zM10 10h2v1h-2zM4 11h5v1h-5zM10 11h1v1h-1zM4 12h4v1h-4zM4 13h4v1h-4zM4 14h2v1h-2z"/><path fill="#0000ff" d="M13 5h1v1h-1zM8 7h1v1h-1zM13 10h1v1h-1zM12 11h1v1h-1zM14 11h1v1h-1zM10 12h1v1h-1zM12 12h1v1h-1zM14 12h1v1h-1zM2 13h1v1h-1zM8 13h1v1h-1zM10 13h1v1h-1zM12 13h1v1h-1zM1 14h1v1h-1zM8 14h1v1h-1z"/><path fill="#000080" d="M12 10h1v1h-1zM14 10h1v1h-1zM11 11h1v1h-1zM13 11h1v1h-1zM15 11h1v1h-1zM9 12h1v1h-1zM11 12h1v1h-1zM13 12h1v1h-1zM15 12h1v1h-1zM1 13h1v1h-1zM3 13h1v1h-1zM9 13h1v1h-1zM11 13h1v1h-1zM13 13h1v1h-1zM0 14h1v1h-1zM2 14h2v1h-2zM6 14h2v1h-2zM9 14h2v1h-2zM1 15h10v1h-10z"/></svg>
<div class="t" style="left:234px;top:337px;color:#000;">RAS- und IAS-Server</div>
<div class="t" style="left:376px;top:337px;color:#000;">Sicherheitsgrup<span class="e">...</span></div>
<div class="t" style="left:476px;top:337px;color:#000;">Server in dieser Gruppe k<span class="e">...</span></div>
<svg style="left:216px;top:353px" width="16" height="16" shape-rendering="crispEdges"><path fill="#000000" d="M8 0h7v1h-7zM7 1h9v1h-9zM3 2h13v1h-13zM2 3h10v1h-10zM14 3h2v1h-2zM1 4h10v1h-10zM15 4h1v1h-1zM0 5h7v1h-7zM9 5h2v1h-2zM15 5h1v1h-1zM0 6h6v1h-6zM10 6h1v1h-1zM15 6h1v1h-1zM0 7h5v1h-5zM10 7h1v1h-1zM14 7h1v1h-1zM0 8h4v1h-4zM10 8h1v1h-1zM14 8h1v1h-1zM1 9h4v1h-4zM9 9h1v1h-1zM13 9h1v1h-1zM1 10h3v1h-3zM9 10h1v1h-1zM1 11h3v1h-3zM9 11h1v1h-1zM2 12h2v1h-2zM8 12h1v1h-1z"/><path fill="#ffffff" d="M12 3h2v1h-2zM11 4h4v1h-4zM7 5h2v1h-2zM11 5h2v1h-2zM14 5h1v1h-1zM6 6h4v1h-4zM11 6h4v1h-4zM5 7h3v1h-3zM9 7h1v1h-1zM11 7h3v1h-3zM4 8h6v1h-6zM11 8h3v1h-3zM5 9h4v1h-4zM10 9h3v1h-3zM4 10h5v1h-5zM10 10h2v1h-2zM4 11h5v1h-5zM10 11h1v1h-1zM4 12h4v1h-4zM4 13h4v1h-4zM4 14h2v1h-2z"/><path fill="#0000ff" d="M13 5h1v1h-1zM8 7h1v1h-1zM13 10h1v1h-1zM12 11h1v1h-1zM14 11h1v1h-1zM10 12h1v1h-1zM12 12h1v1h-1zM14 12h1v1h-1zM2 13h1v1h-1zM8 13h1v1h-1zM10 13h1v1h-1zM12 13h1v1h-1zM1 14h1v1h-1zM8 14h1v1h-1z"/><path fill="#000080" d="M12 10h1v1h-1zM14 10h1v1h-1zM11 11h1v1h-1zM13 11h1v1h-1zM15 11h1v1h-1zM9 12h1v1h-1zM11 12h1v1h-1zM13 12h1v1h-1zM15 12h1v1h-1zM1 13h1v1h-1zM3 13h1v1h-1zM9 13h1v1h-1zM11 13h1v1h-1zM13 13h1v1h-1zM0 14h1v1h-1zM2 14h2v1h-2zM6 14h2v1h-2zM9 14h2v1h-2zM1 15h10v1h-10z"/></svg>
<div class="t" style="left:234px;top:354px;color:#000;">Richtlinien-Ersteller-Besitzer</div>
<div class="t" style="left:376px;top:354px;color:#000;">Sicherheitsgrup<span class="e">...</span></div>
<div class="t" style="left:476px;top:354px;color:#000;">Mitglieder dieser Gruppe <span class="e">...</span></div>
<svg style="left:216px;top:370px" width="16" height="16" shape-rendering="crispEdges"><path fill="#000000" d="M8 0h7v1h-7zM7 1h9v1h-9zM3 2h13v1h-13zM2 3h10v1h-10zM14 3h2v1h-2zM1 4h10v1h-10zM15 4h1v1h-1zM0 5h7v1h-7zM9 5h2v1h-2zM15 5h1v1h-1zM0 6h6v1h-6zM10 6h1v1h-1zM15 6h1v1h-1zM0 7h5v1h-5zM10 7h1v1h-1zM14 7h1v1h-1zM0 8h4v1h-4zM10 8h1v1h-1zM14 8h1v1h-1zM1 9h4v1h-4zM9 9h1v1h-1zM13 9h1v1h-1zM1 10h3v1h-3zM9 10h1v1h-1zM1 11h3v1h-3zM9 11h1v1h-1zM2 12h2v1h-2zM8 12h1v1h-1z"/><path fill="#ffffff" d="M12 3h2v1h-2zM11 4h4v1h-4zM7 5h2v1h-2zM11 5h2v1h-2zM14 5h1v1h-1zM6 6h4v1h-4zM11 6h4v1h-4zM5 7h3v1h-3zM9 7h1v1h-1zM11 7h3v1h-3zM4 8h6v1h-6zM11 8h3v1h-3zM5 9h4v1h-4zM10 9h3v1h-3zM4 10h5v1h-5zM10 10h2v1h-2zM4 11h5v1h-5zM10 11h1v1h-1zM4 12h4v1h-4zM4 13h4v1h-4zM4 14h2v1h-2z"/><path fill="#0000ff" d="M13 5h1v1h-1zM8 7h1v1h-1zM13 10h1v1h-1zM12 11h1v1h-1zM14 11h1v1h-1zM10 12h1v1h-1zM12 12h1v1h-1zM14 12h1v1h-1zM2 13h1v1h-1zM8 13h1v1h-1zM10 13h1v1h-1zM12 13h1v1h-1zM1 14h1v1h-1zM8 14h1v1h-1z"/><path fill="#000080" d="M12 10h1v1h-1zM14 10h1v1h-1zM11 11h1v1h-1zM13 11h1v1h-1zM15 11h1v1h-1zM9 12h1v1h-1zM11 12h1v1h-1zM13 12h1v1h-1zM15 12h1v1h-1zM1 13h1v1h-1zM3 13h1v1h-1zM9 13h1v1h-1zM11 13h1v1h-1zM13 13h1v1h-1zM0 14h1v1h-1zM2 14h2v1h-2zM6 14h2v1h-2zM9 14h2v1h-2zM1 15h10v1h-10z"/></svg>
<div class="t" style="left:234px;top:371px;color:#000;">Schema-Admins</div>
<div class="t" style="left:376px;top:371px;color:#000;">Sicherheitsgrup<span class="e">...</span></div>
<div class="t" style="left:476px;top:371px;color:#000;">Designierte Administrator<span class="e">...</span></div>
<svg style="left:216px;top:387px" width="16" height="16" shape-rendering="crispEdges"><path fill="#000000" d="M5 1h7v1h-7zM4 2h9v1h-9zM3 3h10v1h-10zM2 4h7v1h-7zM12 4h1v1h-1zM2 5h6v1h-6zM11 5h1v1h-1zM2 6h4v1h-4zM12 6h1v1h-1zM2 7h4v1h-4zM12 7h1v1h-1zM2 8h5v1h-5zM11 8h1v1h-1zM3 9h4v1h-4zM11 9h1v1h-1zM3 10h3v1h-3zM11 10h1v1h-1zM4 11h1v1h-1zM9 11h1v1h-1z"/><path fill="#ffffff" d="M9 4h3v1h-3zM8 5h3v1h-3zM12 5h1v1h-1zM6 6h4v1h-4zM11 6h1v1h-1zM6 7h6v1h-6zM7 8h4v1h-4zM7 9h4v1h-4zM6 10h5v1h-5zM5 11h4v1h-4zM5 12h4v1h-4z"/><path fill="#0000ff" d="M10 6h1v1h-1zM10 11h1v1h-1zM4 12h1v1h-1zM10 12h1v1h-1zM3 13h2v1h-2zM11 13h1v1h-1z"/><path fill="#000080" d="M3 12h1v1h-1zM9 12h1v1h-1zM11 12h1v1h-1zM2 13h1v1h-1zM5 13h6v1h-6zM12 13h1v1h-1zM3 14h9v1h-9z"/></svg>
<div class="t" style="left:234px;top:388px;color:#000;">SUPPORT_388945a0</div>
<div class="t" style="left:376px;top:388px;color:#000;">Benutzer</div>
<div class="t" style="left:476px;top:388px;color:#000;">Herstellerkonto für Hilfe- <span class="e">...</span></div>
<svg style="left:216px;top:404px" width="16" height="16" shape-rendering="crispEdges"><path fill="#000000" d="M8 0h7v1h-7zM7 1h9v1h-9zM3 2h13v1h-13zM2 3h10v1h-10zM14 3h2v1h-2zM1 4h10v1h-10zM15 4h1v1h-1zM0 5h7v1h-7zM9 5h2v1h-2zM15 5h1v1h-1zM0 6h6v1h-6zM10 6h1v1h-1zM15 6h1v1h-1zM0 7h5v1h-5zM10 7h1v1h-1zM14 7h1v1h-1zM0 8h4v1h-4zM10 8h1v1h-1zM14 8h1v1h-1zM1 9h4v1h-4zM9 9h1v1h-1zM13 9h1v1h-1zM1 10h3v1h-3zM9 10h1v1h-1zM1 11h3v1h-3zM9 11h1v1h-1zM2 12h2v1h-2zM8 12h1v1h-1z"/><path fill="#ffffff" d="M12 3h2v1h-2zM11 4h4v1h-4zM7 5h2v1h-2zM11 5h2v1h-2zM14 5h1v1h-1zM6 6h4v1h-4zM11 6h4v1h-4zM5 7h3v1h-3zM9 7h1v1h-1zM11 7h3v1h-3zM4 8h6v1h-6zM11 8h3v1h-3zM5 9h4v1h-4zM10 9h3v1h-3zM4 10h5v1h-5zM10 10h2v1h-2zM4 11h5v1h-5zM10 11h1v1h-1zM4 12h4v1h-4zM4 13h4v1h-4zM4 14h2v1h-2z"/><path fill="#0000ff" d="M13 5h1v1h-1zM8 7h1v1h-1zM13 10h1v1h-1zM12 11h1v1h-1zM14 11h1v1h-1zM10 12h1v1h-1zM12 12h1v1h-1zM14 12h1v1h-1zM2 13h1v1h-1zM8 13h1v1h-1zM10 13h1v1h-1zM12 13h1v1h-1zM1 14h1v1h-1zM8 14h1v1h-1z"/><path fill="#000080" d="M12 10h1v1h-1zM14 10h1v1h-1zM11 11h1v1h-1zM13 11h1v1h-1zM15 11h1v1h-1zM9 12h1v1h-1zM11 12h1v1h-1zM13 12h1v1h-1zM15 12h1v1h-1zM1 13h1v1h-1zM3 13h1v1h-1zM9 13h1v1h-1zM11 13h1v1h-1zM13 13h1v1h-1zM0 14h1v1h-1zM2 14h2v1h-2zM6 14h2v1h-2zM9 14h2v1h-2zM1 15h10v1h-10z"/></svg>
<div class="t" style="left:234px;top:405px;color:#000;">TelnetClients</div>
<div class="t" style="left:376px;top:405px;color:#000;">Sicherheitsgrup<span class="e">...</span></div>
<div class="t" style="left:476px;top:405px;color:#000;">Mitglieder dieser Gruppe <span class="e">...</span></div>
<svg style="left:216px;top:421px" width="16" height="16" shape-rendering="crispEdges"><path fill="#000000" d="M5 1h7v1h-7zM4 2h9v1h-9zM3 3h10v1h-10zM2 4h7v1h-7zM12 4h1v1h-1zM2 5h6v1h-6zM11 5h1v1h-1zM2 6h4v1h-4zM12 6h1v1h-1zM2 7h4v1h-4zM12 7h1v1h-1zM2 8h5v1h-5zM11 8h1v1h-1zM3 9h4v1h-4zM11 9h1v1h-1zM3 10h3v1h-3zM11 10h1v1h-1zM4 11h1v1h-1zM9 11h1v1h-1z"/><path fill="#ffffff" d="M9 4h3v1h-3zM8 5h3v1h-3zM12 5h1v1h-1zM6 6h4v1h-4zM11 6h1v1h-1zM6 7h6v1h-6zM7 8h4v1h-4zM7 9h4v1h-4zM6 10h5v1h-5zM5 11h4v1h-4zM5 12h4v1h-4z"/><path fill="#0000ff" d="M10 6h1v1h-1zM10 11h1v1h-1zM4 12h1v1h-1zM10 12h1v1h-1zM3 13h2v1h-2zM11 13h1v1h-1z"/><path fill="#000080" d="M3 12h1v1h-1zM9 12h1v1h-1zM11 12h1v1h-1zM2 13h1v1h-1zM5 13h6v1h-6zM12 13h1v1h-1zM3 14h9v1h-9z"/></svg>
<div class="t" style="left:234px;top:422px;color:#000;">Test PC</div>
<div class="t" style="left:376px;top:422px;color:#000;">Benutzer</div>
<svg style="left:216px;top:438px" width="16" height="16" shape-rendering="crispEdges"><path fill="#000000" d="M8 0h7v1h-7zM7 1h9v1h-9zM3 2h13v1h-13zM2 3h10v1h-10zM14 3h2v1h-2zM1 4h10v1h-10zM15 4h1v1h-1zM0 5h7v1h-7zM9 5h2v1h-2zM15 5h1v1h-1zM0 6h6v1h-6zM10 6h1v1h-1zM15 6h1v1h-1zM0 7h5v1h-5zM10 7h1v1h-1zM14 7h1v1h-1zM0 8h4v1h-4zM10 8h1v1h-1zM14 8h1v1h-1zM1 9h4v1h-4zM9 9h1v1h-1zM13 9h1v1h-1zM1 10h3v1h-3zM9 10h1v1h-1zM1 11h3v1h-3zM9 11h1v1h-1zM2 12h2v1h-2zM8 12h1v1h-1z"/><path fill="#ffffff" d="M12 3h2v1h-2zM11 4h4v1h-4zM7 5h2v1h-2zM11 5h2v1h-2zM14 5h1v1h-1zM6 6h4v1h-4zM11 6h4v1h-4zM5 7h3v1h-3zM9 7h1v1h-1zM11 7h3v1h-3zM4 8h6v1h-6zM11 8h3v1h-3zM5 9h4v1h-4zM10 9h3v1h-3zM4 10h5v1h-5zM10 10h2v1h-2zM4 11h5v1h-5zM10 11h1v1h-1zM4 12h4v1h-4zM4 13h4v1h-4zM4 14h2v1h-2z"/><path fill="#0000ff" d="M13 5h1v1h-1zM8 7h1v1h-1zM13 10h1v1h-1zM12 11h1v1h-1zM14 11h1v1h-1zM10 12h1v1h-1zM12 12h1v1h-1zM14 12h1v1h-1zM2 13h1v1h-1zM8 13h1v1h-1zM10 13h1v1h-1zM12 13h1v1h-1zM1 14h1v1h-1zM8 14h1v1h-1z"/><path fill="#000080" d="M12 10h1v1h-1zM14 10h1v1h-1zM11 11h1v1h-1zM13 11h1v1h-1zM15 11h1v1h-1zM9 12h1v1h-1zM11 12h1v1h-1zM13 12h1v1h-1zM15 12h1v1h-1zM1 13h1v1h-1zM3 13h1v1h-1zM9 13h1v1h-1zM11 13h1v1h-1zM13 13h1v1h-1zM0 14h1v1h-1zM2 14h2v1h-2zM6 14h2v1h-2zM9 14h2v1h-2zM1 15h10v1h-10z"/></svg>
<div class="t" style="left:234px;top:439px;color:#000;">WINS-Benutzer</div>
<div class="t" style="left:376px;top:439px;color:#000;">Sicherheitsgrup<span class="e">...</span></div>
<div class="t" style="left:476px;top:439px;color:#000;">Mitglieder, die nur Lesere<span class="e">...</span></div>
<svg style="left:216px;top:455px" width="16" height="16" shape-rendering="crispEdges"><path fill="#000000" d="M8 0h7v1h-7zM7 1h9v1h-9zM3 2h13v1h-13zM2 3h10v1h-10zM14 3h2v1h-2zM1 4h10v1h-10zM15 4h1v1h-1zM0 5h7v1h-7zM9 5h2v1h-2zM15 5h1v1h-1zM0 6h6v1h-6zM10 6h1v1h-1zM15 6h1v1h-1zM0 7h5v1h-5zM10 7h1v1h-1zM14 7h1v1h-1zM0 8h4v1h-4zM10 8h1v1h-1zM14 8h1v1h-1zM1 9h4v1h-4zM9 9h1v1h-1zM13 9h1v1h-1zM1 10h3v1h-3zM9 10h1v1h-1zM1 11h3v1h-3zM9 11h1v1h-1zM2 12h2v1h-2zM8 12h1v1h-1z"/><path fill="#ffffff" d="M12 3h2v1h-2zM11 4h4v1h-4zM7 5h2v1h-2zM11 5h2v1h-2zM14 5h1v1h-1zM6 6h4v1h-4zM11 6h4v1h-4zM5 7h3v1h-3zM9 7h1v1h-1zM11 7h3v1h-3zM4 8h6v1h-6zM11 8h3v1h-3zM5 9h4v1h-4zM10 9h3v1h-3zM4 10h5v1h-5zM10 10h2v1h-2zM4 11h5v1h-5zM10 11h1v1h-1zM4 12h4v1h-4zM4 13h4v1h-4zM4 14h2v1h-2z"/><path fill="#0000ff" d="M13 5h1v1h-1zM8 7h1v1h-1zM13 10h1v1h-1zM12 11h1v1h-1zM14 11h1v1h-1zM10 12h1v1h-1zM12 12h1v1h-1zM14 12h1v1h-1zM2 13h1v1h-1zM8 13h1v1h-1zM10 13h1v1h-1zM12 13h1v1h-1zM1 14h1v1h-1zM8 14h1v1h-1z"/><path fill="#000080" d="M12 10h1v1h-1zM14 10h1v1h-1zM11 11h1v1h-1zM13 11h1v1h-1zM15 11h1v1h-1zM9 12h1v1h-1zM11 12h1v1h-1zM13 12h1v1h-1zM15 12h1v1h-1zM1 13h1v1h-1zM3 13h1v1h-1zM9 13h1v1h-1zM11 13h1v1h-1zM13 13h1v1h-1zM0 14h1v1h-1zM2 14h2v1h-2zM6 14h2v1h-2zM9 14h2v1h-2zM1 15h10v1h-10z"/></svg>
<div class="t" style="left:234px;top:456px;color:#000;">Zertifikatherausgeber</div>
<div class="t" style="left:376px;top:456px;color:#000;">Sicherheitsgrup<span class="e">...</span></div>
<div class="t" style="left:476px;top:456px;color:#000;">Mitglieder dieser Gruppe <span class="e">...</span></div>
<div style="left:746px;top:581px;font:italic 36px 'Liberation Sans',sans-serif;line-height:40px;color:#fafafa;text-shadow:-1px 0 #707070,-2px 0 #a8a8a8,-1px 1px #d0d0d0;white-space:nowrap;transform:skewX(-8deg) scaleY(1.04);transform-origin:0 100%">WinTotal</div>
<div style="left:78px;top:194px;width:189px;height:221px;background:#d4d0c8;"></div>
<div style="left:79px;top:195px;width:187px;height:1px;background:#ffffff;"></div>
<div style="left:79px;top:195px;width:1px;height:219px;background:#ffffff;"></div>
<div style="left:79px;top:413px;width:187px;height:1px;background:#808080;"></div>
<div style="left:265px;top:195px;width:1px;height:219px;background:#808080;"></div>
<div style="left:78px;top:414px;width:189px;height:1px;background:#404040;"></div>
<div style="left:266px;top:194px;width:1px;height:221px;background:#404040;"></div>
<div class="t" style="left:98px;top:197px;color:#000;"><u>O</u>bjektverwaltung zuweisen<span class="e">...</span></div>
<div class="t" style="left:98px;top:214px;color:#000;"><u>S</u>uchen<span class="e">...</span></div>
<div style="left:82px;top:234px;width:181px;height:1px;background:#808080;"></div>
<div style="left:82px;top:235px;width:181px;height:1px;background:#ffffff;"></div>
<div style="left:81px;top:240px;width:183px;height:17px;background:#0a246a;"></div>
<div class="t" style="left:98px;top:240px;color:#fff;"><u>N</u>eu</div>
<svg style="left:254px;top:244px" width="4" height="7"><path d="M0 0V7L4 3.5Z" fill="#fff"/></svg>
<div class="t" style="left:98px;top:257px;color:#000;">Alle <u>T</u>asks</div>
<svg style="left:254px;top:261px" width="4" height="7"><path d="M0 0V7L4 3.5Z" fill="#000"/></svg>
<div style="left:82px;top:277px;width:181px;height:1px;background:#808080;"></div>
<div style="left:82px;top:278px;width:181px;height:1px;background:#ffffff;"></div>
<div class="t" style="left:98px;top:283px;color:#000;"><u>A</u>nsicht</div>
<svg style="left:254px;top:287px" width="4" height="7"><path d="M0 0V7L4 3.5Z" fill="#000"/></svg>
<div class="t" style="left:98px;top:300px;color:#000;">Ne<u>u</u>es Fenster</div>
<div style="left:82px;top:320px;width:181px;height:1px;background:#808080;"></div>
<div style="left:82px;top:321px;width:181px;height:1px;background:#ffffff;"></div>
<div class="t" style="left:98px;top:326px;color:#000;">A<u>k</u>tualisieren</div>
<div class="t" style="left:98px;top:343px;color:#000;">Liste e<u>x</u>portieren<span class="e">...</span></div>
<div style="left:82px;top:363px;width:181px;height:1px;background:#808080;"></div>
<div style="left:82px;top:364px;width:181px;height:1px;background:#ffffff;"></div>
<div class="t" style="left:98px;top:369px;color:#000;">Eigens<u>c</u>haften</div>
<div style="left:82px;top:389px;width:181px;height:1px;background:#808080;"></div>
<div style="left:82px;top:390px;width:181px;height:1px;background:#ffffff;"></div>
<div class="t" style="left:98px;top:395px;color:#000;"><u>H</u>ilfe</div>
<div style="left:261px;top:237px;width:177px;height:142px;background:#d4d0c8;"></div>
<div style="left:262px;top:238px;width:175px;height:1px;background:#ffffff;"></div>
<div style="left:262px;top:238px;width:1px;height:140px;background:#ffffff;"></div>
<div style="left:262px;top:377px;width:175px;height:1px;background:#808080;"></div>
<div style="left:436px;top:238px;width:1px;height:140px;background:#808080;"></div>
<div style="left:261px;top:378px;width:177px;height:1px;background:#404040;"></div>
<div style="left:437px;top:237px;width:1px;height:142px;background:#404040;"></div>
<div class="t" style="left:280px;top:240px;color:#000;">Computer</div>
<div class="t" style="left:280px;top:257px;color:#000;">Kontakt</div>
<div class="t" style="left:280px;top:274px;color:#000;">Gruppe</div>
<div class="t" style="left:280px;top:291px;color:#000;">InetOrgPerson</div>
<div class="t" style="left:280px;top:308px;color:#000;">MSMQ-Warteschlangenalias</div>
<div class="t" style="left:280px;top:325px;color:#000;">Drucker</div>
<div style="left:264px;top:342px;width:171px;height:17px;background:#0a246a;"></div>
<div class="t" style="left:280px;top:342px;color:#fff;">Benutzer</div>
<div class="t" style="left:280px;top:359px;color:#000;">Freigegebener Ordner</div>
<svg style="left:340px;top:353px" width="12" height="20" shape-rendering="crispEdges"><path fill="#000000" d="M0 0h1v1h-1zM0 1h2v1h-2zM0 2h1v1h-1zM2 2h1v1h-1zM0 3h1v1h-1zM3 3h1v1h-1zM0 4h1v1h-1zM4 4h1v1h-1zM0 5h1v1h-1zM5 5h1v1h-1zM0 6h1v1h-1zM6 6h1v1h-1zM0 7h1v1h-1zM7 7h1v1h-1zM0 8h1v1h-1zM8 8h1v1h-1zM0 9h1v1h-1zM9 9h1v1h-1zM0 10h1v1h-1zM10 10h1v1h-1zM0 11h1v1h-1zM7 11h5v1h-5zM0 12h1v1h-1zM4 12h1v1h-1zM7 12h1v1h-1zM0 13h1v1h-1zM3 13h1v1h-1zM5 13h1v1h-1zM8 13h1v1h-1zM0 14h1v1h-1zM2 14h1v1h-1zM5 14h1v1h-1zM8 14h1v1h-1zM0 15h2v1h-2zM6 15h1v1h-1zM9 15h1v1h-1zM0 16h1v1h-1zM6 16h1v1h-1zM9 16h1v1h-1zM7 17h1v1h-1zM10 17h1v1h-1zM7 18h1v1h-1zM10 18h1v1h-1zM8 19h2v1h-2z"/><path fill="#ffffff" d="M1 2h1v1h-1zM1 3h2v1h-2zM1 4h3v1h-3zM1 5h4v1h-4zM1 6h5v1h-5zM1 7h6v1h-6zM1 8h7v1h-7zM1 9h8v1h-8zM1 10h9v1h-9zM1 11h6v1h-6zM1 12h3v1h-3zM5 12h2v1h-2zM1 13h2v1h-2zM6 13h2v1h-2zM1 14h1v1h-1zM6 14h2v1h-2zM7 15h2v1h-2zM7 16h2v1h-2zM8 17h2v1h-2zM8 18h2v1h-2z"/></svg>
</body></html>
